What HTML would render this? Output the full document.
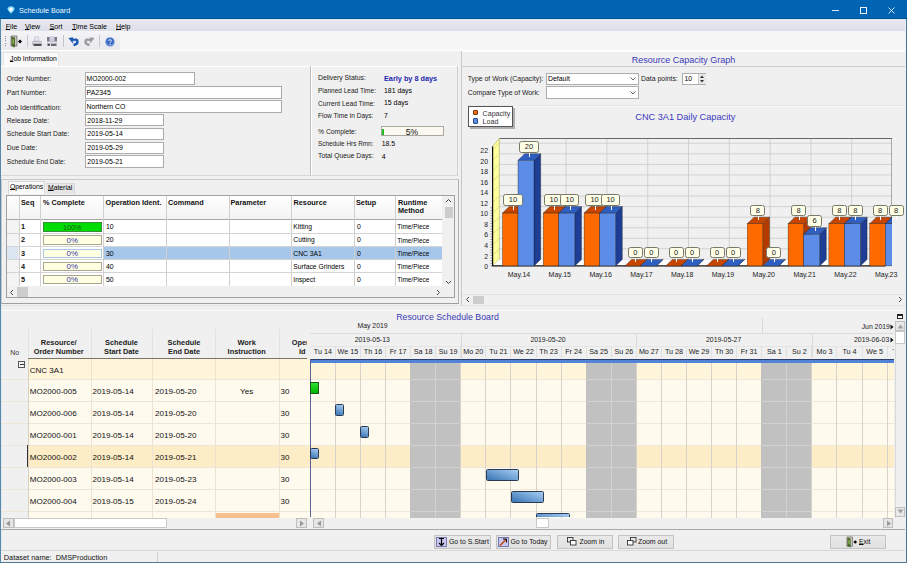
<!DOCTYPE html><html><head><meta charset="utf-8"><style>
html,body{margin:0;padding:0}
body{width:907px;height:563px;overflow:hidden;background:#F0F0F0;position:relative;font-family:"Liberation Sans",sans-serif;color:#000}
.a{position:absolute}
.t{position:absolute;white-space:nowrap;line-height:1}
u{text-decoration:underline;text-underline-offset:0px;text-decoration-thickness:0.7px}
</style></head><body>
<div class="a" style="left:0px;top:0px;width:907px;height:19px;background:#0064B2"></div>
<div class="a" style="left:0px;top:18px;width:907px;height:1px;background:#00508F"></div>
<div class="a" style="left:0px;top:19px;width:907px;height:1px;background:#D6E6F4"></div>
<svg class="a" style="left:7px;top:6px" width="8" height="8" viewBox="0 0 8 8"><path d="M4 7.8 L1 4.2 Q0.2 3 0.6 2 Q1.4 0.3 4 0.3 Q6.6 0.3 7.4 2 Q7.8 3 7 4.2 Z" fill="#8EDCF4"/><path d="M4 6 L2.2 3.8 Q1.8 2.2 4 1.6 Q6.2 2.2 5.8 3.8Z" fill="#F4FCFF"/></svg>
<div class="t" style="left:19px;top:6.67px;font-size:7.2px;color:#F0F8FF;font-weight:400;">Schedule Board</div>
<div class="a" style="left:831.5px;top:9.5px;width:7px;height:1px;background:#D8E8F8"></div>
<div class="a" style="left:859.5px;top:6.5px;width:7px;height:7px;border:1px solid #E8F2FC;box-sizing:border-box"></div>
<svg class="a" style="left:888px;top:6.5px" width="7" height="7" viewBox="0 0 7 7"><path d="M0.5 0.5 L6.5 6.5 M6.5 0.5 L0.5 6.5" stroke="#E8F2FC" stroke-width="0.9"/></svg>
<div class="a" style="left:0px;top:19px;width:1px;height:544px;background:#5A88A8"></div>
<div class="a" style="left:1px;top:20px;width:1px;height:541px;background:#DCEAF2"></div>
<div class="a" style="left:906px;top:19px;width:1px;height:544px;background:#4D7898"></div>
<div class="a" style="left:905px;top:20px;width:1px;height:541px;background:#E4EEF4"></div>
<div class="a" style="left:0px;top:562px;width:907px;height:1px;background:#4D7898"></div>
<div class="a" style="left:1px;top:561px;width:905px;height:1px;background:#E8F0F4"></div>
<div class="a" style="left:2px;top:20px;width:903px;height:11px;background:linear-gradient(#E8E8F0,#DEDEE8)"></div>
<div class="t" style="left:5.8px;top:22.65px;font-size:7.05px;color:#000;font-weight:400;"><u>F</u>ile</div>
<div class="t" style="left:25px;top:22.65px;font-size:7.05px;color:#000;font-weight:400;"><u>V</u>iew</div>
<div class="t" style="left:49.6px;top:22.65px;font-size:7.05px;color:#000;font-weight:400;"><u>S</u>ort</div>
<div class="t" style="left:72px;top:22.65px;font-size:7.05px;color:#000;font-weight:400;"><u>T</u>ime Scale</div>
<div class="t" style="left:116px;top:22.65px;font-size:7.05px;color:#000;font-weight:400;"><u>H</u>elp</div>
<div class="a" style="left:1px;top:31px;width:904px;height:20px;background:#F7F7F8"></div>
<div class="a" style="left:1px;top:31px;width:119px;height:19px;background:linear-gradient(#F4F4F6,#E9E9EE)"></div>
<div class="a" style="left:5px;top:36.0px;width:1px;height:1px;background:#8C8C9A"></div>
<div class="a" style="left:5px;top:38.2px;width:1px;height:1px;background:#8C8C9A"></div>
<div class="a" style="left:5px;top:40.4px;width:1px;height:1px;background:#8C8C9A"></div>
<div class="a" style="left:5px;top:42.6px;width:1px;height:1px;background:#8C8C9A"></div>
<div class="a" style="left:5px;top:44.8px;width:1px;height:1px;background:#8C8C9A"></div>
<div class="a" style="left:26.5px;top:35px;width:1px;height:12px;background:#C5C5CC"></div>
<div class="a" style="left:63.4px;top:35px;width:1px;height:12px;background:#C5C5CC"></div>
<div class="a" style="left:99.2px;top:35px;width:1px;height:12px;background:#C5C5CC"></div>
<svg class="a" style="left:10px;top:35px" width="13" height="13" viewBox="0 0 13 13"><path d="M1 1 H7 V11 H1Z" fill="#C8C8C0" stroke="#606058" stroke-width="0.7"/><path d="M1.5 1.5 L5 2.8 V12.5 L1.5 11Z" fill="#4E6A30"/><path d="M2.5 4 L4 4.5 V9 L2.5 8.5Z" fill="#8AB04A"/><path d="M8 6.5 L10 4.5 L12 6.5 L10 8.5Z" fill="#000"/></svg>
<svg class="a" style="left:32px;top:35.5px" width="10" height="11" viewBox="0 0 10 11"><path d="M2.5 0.5 H7 L7.5 5 H2Z" fill="#C8C8DC"/><path d="M3.5 1.5 H6.3 L6.6 4.5 H3.2Z" fill="#E8E8F4"/><path d="M0.3 5 H9.7 L9.7 9 H0.3Z" fill="#B4B4BC"/><path d="M1 6 H9 V7 H1Z" fill="#E0E0E6"/><path d="M1.5 8 H9.5 V10 H1.5Z" fill="#505058"/></svg>
<svg class="a" style="left:47px;top:36px" width="10" height="10" viewBox="0 0 10 10"><rect x="0" y="1" width="10" height="4" fill="#7A7A88"/><path d="M2.5 0.3 H7.5 V5 H2.5Z" fill="#D0D0E4"/><path d="M0.3 5 H9.7 V8 H0.3Z" fill="#B8B8C0"/><path d="M1 6 H9 V7 H1Z" fill="#E4E4EA"/><path d="M0.5 8 H3 V9.8 H0.5Z M4 8.2 H9.5 V9.8 H4Z" fill="#404048"/></svg>
<svg class="a" style="left:68px;top:37px" width="11" height="9" viewBox="0 0 11 9"><path d="M4 3.2 Q9.5 1.5 9.5 4.8 Q9.5 7.5 5.5 8" stroke="#1A56B0" stroke-width="2.4" fill="none"/><path d="M0.5 1 L5.2 0.3 L4.8 6.5Z" fill="#1A56B0"/><circle cx="5.6" cy="4.4" r="0.9" fill="#9CC4F0"/></svg>
<svg class="a" style="left:83.5px;top:37px" width="11" height="9" viewBox="0 0 11 9"><path d="M7 3.2 Q1.5 1.5 1.5 4.8 Q1.5 7.5 5.5 8" stroke="#9A9AA0" stroke-width="2.4" fill="none"/><path d="M10.5 1 L5.8 0.3 L6.2 6.5Z" fill="#9A9AA0"/></svg>
<svg class="a" style="left:105px;top:37px" width="10" height="10" viewBox="0 0 10 10"><defs><radialGradient id="hg" cx="0.5" cy="0.45" r="0.55"><stop offset="0" stop-color="#1E4FA8"/><stop offset="0.6" stop-color="#3F6FC8"/><stop offset="1" stop-color="#9DB8E8"/></radialGradient></defs><circle cx="5" cy="5" r="4.8" fill="url(#hg)"/><path d="M3.6 4 Q3.8 2.6 5.1 2.6 Q6.5 2.7 6.4 3.9 Q6.3 4.8 5.1 5.2 V6.2" stroke="#E8F0FF" stroke-width="1" fill="none"/><circle cx="5.1" cy="7.4" r="0.6" fill="#E8F0FF"/></svg>
<div class="a" style="left:1px;top:50px;width:904px;height:1px;background:#FFFFFF"></div>
<div class="a" style="left:2.5px;top:52px;width:56.5px;height:14px;background:#F9F9F9;border:1px solid #E6E6E6;border-bottom:none;box-sizing:border-box"></div>
<div class="t" style="left:10px;top:56.47px;font-size:6.8px;color:#000;font-weight:400;"><u>J</u>ob Information</div>
<div class="a" style="left:1px;top:66px;width:458px;height:110px;background:#F0F0F0;border-top:1px solid #FFFFFF;box-sizing:border-box"></div>
<div class="t" style="left:6.75px;top:76.02px;font-size:6.7px;color:#1a1a1a;font-weight:400;">Order Number:</div>
<div class="a" style="left:85.3px;top:72.3px;width:109.4px;height:12.4px;background:#FFFFFF;border:1px solid #ABABAB;box-sizing:border-box"></div>
<div class="t" style="left:86.5px;top:76.18px;font-size:6.77px;color:#000;font-weight:400;">MO2000-002</div>
<div class="t" style="left:6.75px;top:90.02px;font-size:6.69px;color:#1a1a1a;font-weight:400;">Part Number:</div>
<div class="a" style="left:85.3px;top:86.3px;width:197.2px;height:12.4px;background:#FFFFFF;border:1px solid #ABABAB;box-sizing:border-box"></div>
<div class="t" style="left:86.5px;top:90.08px;font-size:6.97px;color:#000;font-weight:400;">PA2345</div>
<div class="t" style="left:6.75px;top:103.77px;font-size:7.0px;color:#1a1a1a;font-weight:400;">Job Identification:</div>
<div class="a" style="left:85.3px;top:100.2px;width:197.2px;height:12.4px;background:#FFFFFF;border:1px solid #ABABAB;box-sizing:border-box"></div>
<div class="t" style="left:86.5px;top:104.04px;font-size:6.85px;color:#000;font-weight:400;">Northern CO</div>
<div class="t" style="left:6.75px;top:117.52px;font-size:6.69px;color:#1a1a1a;font-weight:400;">Release Date:</div>
<div class="a" style="left:85.3px;top:114px;width:78.9px;height:12.4px;background:#FFFFFF;border:1px solid #ABABAB;box-sizing:border-box"></div>
<div class="t" style="left:87.3px;top:117.59px;font-size:6.96px;color:#000;font-weight:400;">2018-11-29</div>
<div class="t" style="left:6.75px;top:131.08px;font-size:6.77px;color:#1a1a1a;font-weight:400;">Schedule Start Date:</div>
<div class="a" style="left:85.3px;top:127.7px;width:78.9px;height:12.4px;background:#FFFFFF;border:1px solid #ABABAB;box-sizing:border-box"></div>
<div class="t" style="left:87.3px;top:131.19px;font-size:6.96px;color:#000;font-weight:400;">2019-05-14</div>
<div class="t" style="left:6.75px;top:145.08px;font-size:6.77px;color:#1a1a1a;font-weight:400;">Due Date:</div>
<div class="a" style="left:85.3px;top:141.6px;width:78.9px;height:12.4px;background:#FFFFFF;border:1px solid #ABABAB;box-sizing:border-box"></div>
<div class="t" style="left:87.3px;top:145.19px;font-size:6.96px;color:#000;font-weight:400;">2019-05-29</div>
<div class="t" style="left:6.75px;top:158.96px;font-size:6.62px;color:#1a1a1a;font-weight:400;">Schedule End Date:</div>
<div class="a" style="left:85.3px;top:155.4px;width:78.9px;height:12.4px;background:#FFFFFF;border:1px solid #ABABAB;box-sizing:border-box"></div>
<div class="t" style="left:87.3px;top:158.99px;font-size:6.96px;color:#000;font-weight:400;">2019-05-21</div>
<div class="a" style="left:310px;top:66px;width:1px;height:110px;background:#BDBDBD"></div>
<div class="a" style="left:311px;top:66px;width:1px;height:110px;background:#FFFFFF"></div>
<div class="t" style="left:318px;top:75.25px;font-size:6.83px;color:#1a1a1a;font-weight:400;">Delivery Status:</div>
<div class="t" style="left:318px;top:88.01px;font-size:6.52px;color:#1a1a1a;font-weight:400;">Planned Lead Time:</div>
<div class="t" style="left:318px;top:100.63px;font-size:6.67px;color:#1a1a1a;font-weight:400;">Current Lead Time:</div>
<div class="t" style="left:318px;top:112.98px;font-size:6.57px;color:#1a1a1a;font-weight:400;">Flow Time in Days:</div>
<div class="t" style="left:318px;top:128.69px;font-size:6.76px;color:#1a1a1a;font-weight:400;">% Complete:</div>
<div class="t" style="left:318px;top:141.46px;font-size:6.4px;color:#1a1a1a;font-weight:400;">Schedule Hrs Rmn:</div>
<div class="t" style="left:318px;top:153.19px;font-size:6.75px;color:#1a1a1a;font-weight:400;">Total Queue Days:</div>
<div class="t" style="left:384px;top:75.22px;font-size:7.3px;color:#1C28B0;font-weight:700;">Early by 8 days</div>
<div class="t" style="left:384px;top:87.92px;font-size:6.9px;color:#000;font-weight:400;">181 days</div>
<div class="t" style="left:384px;top:100.42px;font-size:6.9px;color:#000;font-weight:400;">15 days</div>
<div class="t" style="left:384px;top:112.92px;font-size:6.9px;color:#000;font-weight:400;">7</div>
<div class="a" style="left:380.5px;top:125.5px;width:63px;height:10.5px;background:#FCFAF0;border:1px solid #A8A8A0;box-sizing:border-box"></div>
<div class="a" style="left:381.5px;top:129px;width:2px;height:6px;background:#22BB22"></div>
<div class="t" style="left:212px;width:400px;text-align:center;top:127.59px;font-size:8.6px;color:#111;font-weight:400;">5%</div>
<div class="t" style="left:381.7px;top:141.02px;font-size:6.9px;color:#000;font-weight:400;">18.5</div>
<div class="t" style="left:381.7px;top:153.82px;font-size:6.9px;color:#000;font-weight:400;">4</div>
<div class="a" style="left:1px;top:175px;width:457px;height:1px;background:#D8D8D8"></div>
<div class="a" style="left:457px;top:66px;width:1px;height:110px;background:#D0D0D0"></div>
<div class="a" style="left:1px;top:179px;width:457.5px;height:125px;border:1px solid #C8C8C8;border-right-color:#B0B0B0;border-bottom-color:#A0A0A0;box-sizing:border-box"></div>
<div class="a" style="left:8px;top:181px;width:37px;height:13px;background:#FAFAFA;border:1px solid #D8D8D8;border-bottom:none;box-sizing:border-box"></div>
<div class="t" style="left:10px;top:183.77px;font-size:6.8px;color:#000;font-weight:400;"><u>O</u>perations</div>
<div class="a" style="left:45.5px;top:182.5px;width:29px;height:11.5px;background:#E6E6E6;border:1px solid #D8D8D8;border-bottom:none;border-left:none;box-sizing:border-box"></div>
<div class="t" style="left:48px;top:184.77px;font-size:6.8px;color:#000;font-weight:400;"><u>M</u>aterial</div>
<div class="a" style="left:5.8px;top:195.2px;width:449.2px;height:102.80000000000001px;background:#F0F0F0;border:1px solid #A0A0A0;box-sizing:border-box"></div>
<div class="a" style="left:6.8px;top:196.2px;width:435.2px;height:23.0px;background:linear-gradient(#FFFFFF,#F3F3F3)"></div>
<div class="a" style="left:6.8px;top:219.2px;width:435.2px;height:1px;background:#A9A9A9"></div>
<div class="a" style="left:18.5px;top:220.2px;width:423.5px;height:65.40000000000003px;background:#FFFFFF"></div>
<div class="a" style="left:6.8px;top:220.2px;width:11.7px;height:65.40000000000003px;background:#F4F4F4"></div>
<div class="a" style="left:103.3px;top:246.8px;width:338.7px;height:12.6px;background:#A7C7EA"></div>
<div class="a" style="left:6.8px;top:246.8px;width:11.7px;height:12.6px;background:#DCE6F2"></div>
<div class="a" style="left:6.8px;top:232.9px;width:435.2px;height:1px;background:#D4D4D4"></div>
<div class="a" style="left:6.8px;top:246.3px;width:435.2px;height:1px;background:#D4D4D4"></div>
<div class="a" style="left:6.8px;top:259.4px;width:435.2px;height:1px;background:#D4D4D4"></div>
<div class="a" style="left:6.8px;top:272.4px;width:435.2px;height:1px;background:#D4D4D4"></div>
<div class="a" style="left:6.8px;top:285.6px;width:435.2px;height:1px;background:#D4D4D4"></div>
<div class="a" style="left:18.5px;top:196.2px;width:1px;height:89.40000000000003px;background:#CFCFCF"></div>
<div class="a" style="left:40.4px;top:196.2px;width:1px;height:89.40000000000003px;background:#CFCFCF"></div>
<div class="a" style="left:103.3px;top:196.2px;width:1px;height:89.40000000000003px;background:#CFCFCF"></div>
<div class="a" style="left:166px;top:196.2px;width:1px;height:89.40000000000003px;background:#CFCFCF"></div>
<div class="a" style="left:228.5px;top:196.2px;width:1px;height:89.40000000000003px;background:#CFCFCF"></div>
<div class="a" style="left:291.4px;top:196.2px;width:1px;height:89.40000000000003px;background:#CFCFCF"></div>
<div class="a" style="left:354px;top:196.2px;width:1px;height:89.40000000000003px;background:#CFCFCF"></div>
<div class="a" style="left:395px;top:196.2px;width:1px;height:89.40000000000003px;background:#CFCFCF"></div>
<div class="a" style="left:442px;top:196.2px;width:1px;height:89.40000000000003px;background:#CFCFCF"></div>
<div class="t" style="left:21px;top:199.02px;font-size:7.3px;color:#111;font-weight:700;">Seq</div>
<div class="t" style="left:43px;top:199.02px;font-size:7.3px;color:#111;font-weight:700;">% Complete</div>
<div class="t" style="left:105.5px;top:199.02px;font-size:7.3px;color:#111;font-weight:700;">Operation Ident.</div>
<div class="t" style="left:168px;top:199.02px;font-size:7.3px;color:#111;font-weight:700;">Command</div>
<div class="t" style="left:230.5px;top:199.02px;font-size:7.3px;color:#111;font-weight:700;">Parameter</div>
<div class="t" style="left:293.5px;top:199.02px;font-size:7.3px;color:#111;font-weight:700;">Resource</div>
<div class="t" style="left:356px;top:199.02px;font-size:7.3px;color:#111;font-weight:700;">Setup</div>
<div class="t" style="left:398px;top:199.02px;font-size:7.3px;color:#111;font-weight:700;">Runtime</div>
<div class="t" style="left:398px;top:206.92px;font-size:7.3px;color:#111;font-weight:700;">Method</div>
<div class="t" style="left:21px;top:223.02px;font-size:7.3px;color:#111;font-weight:700;">1</div>
<div class="a" style="left:42.8px;top:222.2px;width:59px;height:9.5px;background:#00DD00;border:1px solid #3A8A3A;box-sizing:border-box"></div>
<div class="t" style="left:-127.7px;width:400px;text-align:center;top:223.87px;font-size:7.2px;color:#225522;font-weight:400;">100%</div>
<div class="t" style="left:106px;top:224.02px;font-size:6.9px;color:#000;font-weight:400;">10</div>
<div class="t" style="left:293.3px;top:224.09px;font-size:6.75px;color:#000;font-weight:400;">Kitting</div>
<div class="t" style="left:357px;top:224.02px;font-size:6.9px;color:#000;font-weight:400;">0</div>
<div class="t" style="left:397.3px;top:224.24px;font-size:6.45px;color:#000;font-weight:400;">Time/Piece</div>
<div class="t" style="left:21px;top:236.32px;font-size:7.3px;color:#111;font-weight:700;">2</div>
<div class="a" style="left:42.8px;top:235.4px;width:59px;height:9.5px;background:#FFFFE2;border:1px solid #A8A890;box-sizing:border-box"></div>
<div class="t" style="left:-127.7px;width:400px;text-align:center;top:236.83px;font-size:7.9px;color:#3535A5;font-weight:400;">0%</div>
<div class="t" style="left:106px;top:237.32px;font-size:6.9px;color:#000;font-weight:400;">20</div>
<div class="t" style="left:293.3px;top:237.39px;font-size:6.75px;color:#000;font-weight:400;">Cutting</div>
<div class="t" style="left:357px;top:237.32px;font-size:6.9px;color:#000;font-weight:400;">0</div>
<div class="t" style="left:397.3px;top:237.54px;font-size:6.45px;color:#000;font-weight:400;">Time/Piece</div>
<div class="t" style="left:21px;top:249.57px;font-size:7.3px;color:#111;font-weight:700;">3</div>
<div class="a" style="left:42.8px;top:248.8px;width:59px;height:9.5px;background:#FFFFE2;border:1px solid #A9C7E8;box-sizing:border-box"></div>
<div class="t" style="left:-127.7px;width:400px;text-align:center;top:250.08px;font-size:7.9px;color:#3535A5;font-weight:400;">0%</div>
<div class="t" style="left:106px;top:250.57px;font-size:6.9px;color:#000;font-weight:400;">30</div>
<div class="t" style="left:293.3px;top:250.64px;font-size:6.75px;color:#000;font-weight:400;">CNC 3A1</div>
<div class="t" style="left:357px;top:250.57px;font-size:6.9px;color:#000;font-weight:400;">0</div>
<div class="t" style="left:397.3px;top:250.79px;font-size:6.45px;color:#000;font-weight:400;">Time/Piece</div>
<div class="t" style="left:21px;top:262.62px;font-size:7.3px;color:#111;font-weight:700;">4</div>
<div class="a" style="left:42.8px;top:261.9px;width:59px;height:9.5px;background:#FFFFE2;border:1px solid #A8A890;box-sizing:border-box"></div>
<div class="t" style="left:-127.7px;width:400px;text-align:center;top:263.13px;font-size:7.9px;color:#3535A5;font-weight:400;">0%</div>
<div class="t" style="left:106px;top:263.62px;font-size:6.9px;color:#000;font-weight:400;">40</div>
<div class="t" style="left:293.3px;top:263.69px;font-size:6.75px;color:#000;font-weight:400;">Surface Grinders</div>
<div class="t" style="left:357px;top:263.62px;font-size:6.9px;color:#000;font-weight:400;">0</div>
<div class="t" style="left:397.3px;top:263.84px;font-size:6.45px;color:#000;font-weight:400;">Time/Piece</div>
<div class="t" style="left:21px;top:275.72px;font-size:7.3px;color:#111;font-weight:700;">5</div>
<div class="a" style="left:42.8px;top:274.9px;width:59px;height:9.5px;background:#FFFFE2;border:1px solid #A8A890;box-sizing:border-box"></div>
<div class="t" style="left:-127.7px;width:400px;text-align:center;top:276.23px;font-size:7.9px;color:#3535A5;font-weight:400;">0%</div>
<div class="t" style="left:106px;top:276.72px;font-size:6.9px;color:#000;font-weight:400;">50</div>
<div class="t" style="left:293.3px;top:276.79px;font-size:6.75px;color:#000;font-weight:400;">Inspect</div>
<div class="t" style="left:357px;top:276.72px;font-size:6.9px;color:#000;font-weight:400;">0</div>
<div class="t" style="left:397.3px;top:276.94px;font-size:6.45px;color:#000;font-weight:400;">Time/Piece</div>
<div class="a" style="left:442px;top:196.2px;width:12px;height:89.40000000000003px;background:#F0F0F0"></div>
<svg class="a" style="left:445px;top:198px" width="7" height="5" viewBox="0 0 7 5"><path d="M1 4 L3.5 1.5 L6 4" stroke="#444" stroke-width="1" fill="none"/></svg>
<div class="a" style="left:444.5px;top:207px;width:8px;height:11px;background:#CDCDCD"></div>
<svg class="a" style="left:445px;top:280px" width="7" height="5" viewBox="0 0 7 5"><path d="M1 1 L3.5 3.5 L6 1" stroke="#444" stroke-width="1" fill="none"/></svg>
<div class="a" style="left:6.8px;top:285.6px;width:435.2px;height:11.5px;background:#F0F0F0"></div>
<svg class="a" style="left:9px;top:289px" width="5" height="7" viewBox="0 0 5 7"><path d="M4 1 L1.5 3.5 L4 6" stroke="#444" stroke-width="1" fill="none"/></svg>
<div class="a" style="left:17.3px;top:287px;width:10.5px;height:9.5px;background:#CDCDCD"></div>
<svg class="a" style="left:436px;top:289px" width="5" height="7" viewBox="0 0 5 7"><path d="M1 1 L3.5 3.5 L1 6" stroke="#444" stroke-width="1" fill="none"/></svg>
<div class="a" style="left:460.5px;top:51px;width:1px;height:254px;background:#C8C8C8"></div>
<div class="a" style="left:462px;top:51px;width:443px;height:255px;background:#F0F0F0"></div>
<div class="a" style="left:462px;top:51px;width:443px;height:1px;background:#FFFFFF"></div>
<div class="a" style="left:462px;top:66px;width:443px;height:1px;background:#CFCFCF"></div>
<div class="t" style="left:483.5px;width:400px;text-align:center;top:55.69px;font-size:9.0px;color:#3A3AB5;font-weight:400;">Resource Capacity Graph</div>
<div class="t" style="left:467.7px;top:76.02px;font-size:6.9px;color:#1a1a1a;font-weight:400;">Type of Work (Capacity):</div>
<div class="a" style="left:546px;top:72.5px;width:93px;height:12.8px;background:#FFFFFF;border:1px solid #ADADAD;box-sizing:border-box"></div>
<div class="t" style="left:548px;top:76.02px;font-size:6.9px;color:#000;font-weight:400;">Default</div>
<svg class="a" style="left:630px;top:77px" width="6" height="4" viewBox="0 0 6 4"><path d="M0.5 0.5 L3 3 L5.5 0.5" stroke="#555" stroke-width="0.9" fill="none"/></svg>
<div class="t" style="left:641px;top:76.02px;font-size:6.9px;color:#1a1a1a;font-weight:400;">Data points:</div>
<div class="a" style="left:682px;top:72.5px;width:24px;height:12.8px;background:#FFFFFF;border:1px solid #ADADAD;box-sizing:border-box"></div>
<div class="t" style="left:684.5px;top:76.12px;font-size:6.9px;color:#000;font-weight:400;">10</div>
<div class="a" style="left:698px;top:73.5px;width:7px;height:10.8px;background:#E8E8E8;border-left:1px solid #C8C8C8"></div>
<svg class="a" style="left:699px;top:74px" width="6" height="10" viewBox="0 0 6 10"><path d="M1 4 L3 1.5 L5 4Z M1 6 L3 8.5 L5 6Z" fill="#333"/></svg>
<div class="t" style="left:467.7px;top:89.84px;font-size:6.85px;color:#1a1a1a;font-weight:400;">Compare Type of Work:</div>
<div class="a" style="left:546px;top:86.3px;width:93px;height:12.5px;background:#FFFFFF;border:1px solid #ADADAD;box-sizing:border-box"></div>
<svg class="a" style="left:630px;top:91px" width="6" height="4" viewBox="0 0 6 4"><path d="M0.5 0.5 L3 3 L5.5 0.5" stroke="#555" stroke-width="0.9" fill="none"/></svg>
<div class="a" style="left:462px;top:104.5px;width:443px;height:1px;background:#E8E8E8"></div>
<div class="a" style="left:462px;top:105.5px;width:443px;height:1px;background:#F6F6F6"></div>
<div class="a" style="left:469.5px;top:107.5px;width:45px;height:21px;background:#B0B0B0"></div>
<div class="a" style="left:468.4px;top:106.4px;width:45px;height:21px;background:#FFFFFF;border:1px solid #555;box-sizing:border-box"></div>
<div class="a" style="left:472.5px;top:109.7px;width:5.6px;height:5.4px;background:#F06A14;border:1px solid #7A3A10;border-radius:1px;box-sizing:border-box"></div>
<div class="a" style="left:472.5px;top:118.4px;width:5.6px;height:5.4px;background:#5A8EE0;border:1px solid #2A4A88;border-radius:1px;box-sizing:border-box"></div>
<div class="t" style="left:482.6px;top:110.92px;font-size:7.1px;color:#333;font-weight:400;">Capacity</div>
<div class="t" style="left:482.6px;top:119.32px;font-size:7.1px;color:#333;font-weight:400;">Load</div>
<div class="t" style="left:485.29999999999995px;width:400px;text-align:center;top:113.49px;font-size:9.2px;color:#3A3AC0;font-weight:400;">CNC 3A1 Daily Capacity</div>
<svg class="a" style="left:462px;top:130px" width="443" height="200" viewBox="0 0 443 200"><clipPath id="cc"><rect x="0" y="0" width="430.00" height="200"/></clipPath><g clip-path="url(#cc)"><rect x="37.30" y="8.50" width="392.70" height="120.90" fill="#F0F0F0"/><line x1="37.30" y1="129.40" x2="430.00" y2="129.40" stroke="#C9C9C9" stroke-width="0.8"/><line x1="37.30" y1="118.84" x2="430.00" y2="118.84" stroke="#C9C9C9" stroke-width="0.8"/><line x1="37.30" y1="108.28" x2="430.00" y2="108.28" stroke="#C9C9C9" stroke-width="0.8"/><line x1="37.30" y1="97.72" x2="430.00" y2="97.72" stroke="#C9C9C9" stroke-width="0.8"/><line x1="37.30" y1="87.16" x2="430.00" y2="87.16" stroke="#C9C9C9" stroke-width="0.8"/><line x1="37.30" y1="76.60" x2="430.00" y2="76.60" stroke="#C9C9C9" stroke-width="0.8"/><line x1="37.30" y1="66.04" x2="430.00" y2="66.04" stroke="#C9C9C9" stroke-width="0.8"/><line x1="37.30" y1="55.48" x2="430.00" y2="55.48" stroke="#C9C9C9" stroke-width="0.8"/><line x1="37.30" y1="44.92" x2="430.00" y2="44.92" stroke="#C9C9C9" stroke-width="0.8"/><line x1="37.30" y1="34.36" x2="430.00" y2="34.36" stroke="#C9C9C9" stroke-width="0.8"/><line x1="37.30" y1="23.80" x2="430.00" y2="23.80" stroke="#C9C9C9" stroke-width="0.8"/><line x1="37.30" y1="13.24" x2="430.00" y2="13.24" stroke="#C9C9C9" stroke-width="0.8"/><line x1="63.30" y1="8.50" x2="63.30" y2="129.40" stroke="#C9C9C9" stroke-width="0.8"/><line x1="104.10" y1="8.50" x2="104.10" y2="129.40" stroke="#C9C9C9" stroke-width="0.8"/><line x1="144.90" y1="8.50" x2="144.90" y2="129.40" stroke="#C9C9C9" stroke-width="0.8"/><line x1="185.70" y1="8.50" x2="185.70" y2="129.40" stroke="#C9C9C9" stroke-width="0.8"/><line x1="226.50" y1="8.50" x2="226.50" y2="129.40" stroke="#C9C9C9" stroke-width="0.8"/><line x1="267.30" y1="8.50" x2="267.30" y2="129.40" stroke="#C9C9C9" stroke-width="0.8"/><line x1="308.10" y1="8.50" x2="308.10" y2="129.40" stroke="#C9C9C9" stroke-width="0.8"/><line x1="348.90" y1="8.50" x2="348.90" y2="129.40" stroke="#C9C9C9" stroke-width="0.8"/><line x1="389.70" y1="8.50" x2="389.70" y2="129.40" stroke="#C9C9C9" stroke-width="0.8"/><line x1="430.50" y1="8.50" x2="430.50" y2="129.40" stroke="#C9C9C9" stroke-width="0.8"/><polyline points="37.30,8.50 430.00,8.50 430.00,129.40" fill="none" stroke="#666" stroke-width="1"/><polygon points="30.60,135.90 30.60,16.50 37.30,8.50 37.30,129.40" fill="#FFFF9C" stroke="#A8A860" stroke-width="0.6"/><line x1="30.60" y1="135.90" x2="37.30" y2="129.40" stroke="#C8C888" stroke-width="0.6"/><line x1="30.60" y1="125.34" x2="37.30" y2="118.84" stroke="#C8C888" stroke-width="0.6"/><line x1="30.60" y1="114.78" x2="37.30" y2="108.28" stroke="#C8C888" stroke-width="0.6"/><line x1="30.60" y1="104.22" x2="37.30" y2="97.72" stroke="#C8C888" stroke-width="0.6"/><line x1="30.60" y1="93.66" x2="37.30" y2="87.16" stroke="#C8C888" stroke-width="0.6"/><line x1="30.60" y1="83.10" x2="37.30" y2="76.60" stroke="#C8C888" stroke-width="0.6"/><line x1="30.60" y1="72.54" x2="37.30" y2="66.04" stroke="#C8C888" stroke-width="0.6"/><line x1="30.60" y1="61.98" x2="37.30" y2="55.48" stroke="#C8C888" stroke-width="0.6"/><line x1="30.60" y1="51.42" x2="37.30" y2="44.92" stroke="#C8C888" stroke-width="0.6"/><line x1="30.60" y1="40.86" x2="37.30" y2="34.36" stroke="#C8C888" stroke-width="0.6"/><line x1="30.60" y1="30.30" x2="37.30" y2="23.80" stroke="#C8C888" stroke-width="0.6"/><line x1="30.60" y1="19.74" x2="37.30" y2="13.24" stroke="#C8C888" stroke-width="0.6"/><polygon points="30.60,135.90 37.30,129.40 430.00,129.40 423.30,135.90" fill="#FFFFFF"/><line x1="30.60" y1="135.90" x2="423.30" y2="135.90" stroke="#111" stroke-width="1.2"/><line x1="30.60" y1="135.90" x2="30.60" y2="16.50" stroke="#111" stroke-width="1.2"/><line x1="28.60" y1="135.90" x2="30.60" y2="135.90" stroke="#111" stroke-width="0.5"/><line x1="28.60" y1="133.26" x2="30.60" y2="133.26" stroke="#111" stroke-width="0.5"/><line x1="28.60" y1="130.62" x2="30.60" y2="130.62" stroke="#111" stroke-width="0.5"/><line x1="28.60" y1="127.98" x2="30.60" y2="127.98" stroke="#111" stroke-width="0.5"/><line x1="28.60" y1="125.34" x2="30.60" y2="125.34" stroke="#111" stroke-width="0.5"/><line x1="28.60" y1="122.70" x2="30.60" y2="122.70" stroke="#111" stroke-width="0.5"/><line x1="28.60" y1="120.06" x2="30.60" y2="120.06" stroke="#111" stroke-width="0.5"/><line x1="28.60" y1="117.42" x2="30.60" y2="117.42" stroke="#111" stroke-width="0.5"/><line x1="28.60" y1="114.78" x2="30.60" y2="114.78" stroke="#111" stroke-width="0.5"/><line x1="28.60" y1="112.14" x2="30.60" y2="112.14" stroke="#111" stroke-width="0.5"/><line x1="28.60" y1="109.50" x2="30.60" y2="109.50" stroke="#111" stroke-width="0.5"/><line x1="28.60" y1="106.86" x2="30.60" y2="106.86" stroke="#111" stroke-width="0.5"/><line x1="28.60" y1="104.22" x2="30.60" y2="104.22" stroke="#111" stroke-width="0.5"/><line x1="28.60" y1="101.58" x2="30.60" y2="101.58" stroke="#111" stroke-width="0.5"/><line x1="28.60" y1="98.94" x2="30.60" y2="98.94" stroke="#111" stroke-width="0.5"/><line x1="28.60" y1="96.30" x2="30.60" y2="96.30" stroke="#111" stroke-width="0.5"/><line x1="28.60" y1="93.66" x2="30.60" y2="93.66" stroke="#111" stroke-width="0.5"/><line x1="28.60" y1="91.02" x2="30.60" y2="91.02" stroke="#111" stroke-width="0.5"/><line x1="28.60" y1="88.38" x2="30.60" y2="88.38" stroke="#111" stroke-width="0.5"/><line x1="28.60" y1="85.74" x2="30.60" y2="85.74" stroke="#111" stroke-width="0.5"/><line x1="28.60" y1="83.10" x2="30.60" y2="83.10" stroke="#111" stroke-width="0.5"/><line x1="28.60" y1="80.46" x2="30.60" y2="80.46" stroke="#111" stroke-width="0.5"/><line x1="28.60" y1="77.82" x2="30.60" y2="77.82" stroke="#111" stroke-width="0.5"/><polygon points="56.00,135.90 56.00,83.10 62.70,76.60 62.70,129.40" fill="#B23C00" stroke="#1a1a1a" stroke-width="0.35"/><polygon points="40.50,83.10 47.20,76.60 62.70,76.60 56.00,83.10" fill="#C64600" stroke="#1a1a1a" stroke-width="0.35"/><rect x="40.50" y="83.10" width="15.50" height="52.80" fill="#FF6A00" stroke="#1a1a1a" stroke-width="0.35"/><polygon points="72.00,135.90 72.00,30.30 78.70,23.80 78.70,129.40" fill="#1E3E96" stroke="#1a1a1a" stroke-width="0.35"/><polygon points="56.00,30.30 62.70,23.80 78.70,23.80 72.00,30.30" fill="#2F5FC0" stroke="#1a1a1a" stroke-width="0.35"/><rect x="56.00" y="30.30" width="16.00" height="105.60" fill="#5B8DE8" stroke="#1a1a1a" stroke-width="0.35"/><polygon points="96.80,135.90 96.80,83.10 103.50,76.60 103.50,129.40" fill="#B23C00" stroke="#1a1a1a" stroke-width="0.35"/><polygon points="81.30,83.10 88.00,76.60 103.50,76.60 96.80,83.10" fill="#C64600" stroke="#1a1a1a" stroke-width="0.35"/><rect x="81.30" y="83.10" width="15.50" height="52.80" fill="#FF6A00" stroke="#1a1a1a" stroke-width="0.35"/><polygon points="112.80,135.90 112.80,83.10 119.50,76.60 119.50,129.40" fill="#1E3E96" stroke="#1a1a1a" stroke-width="0.35"/><polygon points="96.80,83.10 103.50,76.60 119.50,76.60 112.80,83.10" fill="#2F5FC0" stroke="#1a1a1a" stroke-width="0.35"/><rect x="96.80" y="83.10" width="16.00" height="52.80" fill="#5B8DE8" stroke="#1a1a1a" stroke-width="0.35"/><polygon points="137.60,135.90 137.60,83.10 144.30,76.60 144.30,129.40" fill="#B23C00" stroke="#1a1a1a" stroke-width="0.35"/><polygon points="122.10,83.10 128.80,76.60 144.30,76.60 137.60,83.10" fill="#C64600" stroke="#1a1a1a" stroke-width="0.35"/><rect x="122.10" y="83.10" width="15.50" height="52.80" fill="#FF6A00" stroke="#1a1a1a" stroke-width="0.35"/><polygon points="153.60,135.90 153.60,83.10 160.30,76.60 160.30,129.40" fill="#1E3E96" stroke="#1a1a1a" stroke-width="0.35"/><polygon points="137.60,83.10 144.30,76.60 160.30,76.60 153.60,83.10" fill="#2F5FC0" stroke="#1a1a1a" stroke-width="0.35"/><rect x="137.60" y="83.10" width="16.00" height="52.80" fill="#5B8DE8" stroke="#1a1a1a" stroke-width="0.35"/><polygon points="178.40,135.90 178.40,135.90 185.10,129.40 185.10,129.40" fill="#B23C00" stroke="#1a1a1a" stroke-width="0.35"/><polygon points="162.90,135.90 169.60,129.40 185.10,129.40 178.40,135.90" fill="#C64600" stroke="#1a1a1a" stroke-width="0.35"/><polygon points="194.40,135.90 194.40,135.90 201.10,129.40 201.10,129.40" fill="#1E3E96" stroke="#1a1a1a" stroke-width="0.35"/><polygon points="178.40,135.90 185.10,129.40 201.10,129.40 194.40,135.90" fill="#2F5FC0" stroke="#1a1a1a" stroke-width="0.35"/><polygon points="219.20,135.90 219.20,135.90 225.90,129.40 225.90,129.40" fill="#B23C00" stroke="#1a1a1a" stroke-width="0.35"/><polygon points="203.70,135.90 210.40,129.40 225.90,129.40 219.20,135.90" fill="#C64600" stroke="#1a1a1a" stroke-width="0.35"/><polygon points="235.20,135.90 235.20,135.90 241.90,129.40 241.90,129.40" fill="#1E3E96" stroke="#1a1a1a" stroke-width="0.35"/><polygon points="219.20,135.90 225.90,129.40 241.90,129.40 235.20,135.90" fill="#2F5FC0" stroke="#1a1a1a" stroke-width="0.35"/><polygon points="260.00,135.90 260.00,135.90 266.70,129.40 266.70,129.40" fill="#B23C00" stroke="#1a1a1a" stroke-width="0.35"/><polygon points="244.50,135.90 251.20,129.40 266.70,129.40 260.00,135.90" fill="#C64600" stroke="#1a1a1a" stroke-width="0.35"/><polygon points="276.00,135.90 276.00,135.90 282.70,129.40 282.70,129.40" fill="#1E3E96" stroke="#1a1a1a" stroke-width="0.35"/><polygon points="260.00,135.90 266.70,129.40 282.70,129.40 276.00,135.90" fill="#2F5FC0" stroke="#1a1a1a" stroke-width="0.35"/><polygon points="300.80,135.90 300.80,93.66 307.50,87.16 307.50,129.40" fill="#B23C00" stroke="#1a1a1a" stroke-width="0.35"/><polygon points="285.30,93.66 292.00,87.16 307.50,87.16 300.80,93.66" fill="#C64600" stroke="#1a1a1a" stroke-width="0.35"/><rect x="285.30" y="93.66" width="15.50" height="42.24" fill="#FF6A00" stroke="#1a1a1a" stroke-width="0.35"/><polygon points="316.80,135.90 316.80,135.90 323.50,129.40 323.50,129.40" fill="#1E3E96" stroke="#1a1a1a" stroke-width="0.35"/><polygon points="300.80,135.90 307.50,129.40 323.50,129.40 316.80,135.90" fill="#2F5FC0" stroke="#1a1a1a" stroke-width="0.35"/><polygon points="341.60,135.90 341.60,93.66 348.30,87.16 348.30,129.40" fill="#B23C00" stroke="#1a1a1a" stroke-width="0.35"/><polygon points="326.10,93.66 332.80,87.16 348.30,87.16 341.60,93.66" fill="#C64600" stroke="#1a1a1a" stroke-width="0.35"/><rect x="326.10" y="93.66" width="15.50" height="42.24" fill="#FF6A00" stroke="#1a1a1a" stroke-width="0.35"/><polygon points="357.60,135.90 357.60,104.22 364.30,97.72 364.30,129.40" fill="#1E3E96" stroke="#1a1a1a" stroke-width="0.35"/><polygon points="341.60,104.22 348.30,97.72 364.30,97.72 357.60,104.22" fill="#2F5FC0" stroke="#1a1a1a" stroke-width="0.35"/><rect x="341.60" y="104.22" width="16.00" height="31.68" fill="#5B8DE8" stroke="#1a1a1a" stroke-width="0.35"/><polygon points="382.40,135.90 382.40,93.66 389.10,87.16 389.10,129.40" fill="#B23C00" stroke="#1a1a1a" stroke-width="0.35"/><polygon points="366.90,93.66 373.60,87.16 389.10,87.16 382.40,93.66" fill="#C64600" stroke="#1a1a1a" stroke-width="0.35"/><rect x="366.90" y="93.66" width="15.50" height="42.24" fill="#FF6A00" stroke="#1a1a1a" stroke-width="0.35"/><polygon points="398.40,135.90 398.40,93.66 405.10,87.16 405.10,129.40" fill="#1E3E96" stroke="#1a1a1a" stroke-width="0.35"/><polygon points="382.40,93.66 389.10,87.16 405.10,87.16 398.40,93.66" fill="#2F5FC0" stroke="#1a1a1a" stroke-width="0.35"/><rect x="382.40" y="93.66" width="16.00" height="42.24" fill="#5B8DE8" stroke="#1a1a1a" stroke-width="0.35"/><polygon points="423.20,135.90 423.20,93.66 429.90,87.16 429.90,129.40" fill="#B23C00" stroke="#1a1a1a" stroke-width="0.35"/><polygon points="407.70,93.66 414.40,87.16 429.90,87.16 423.20,93.66" fill="#C64600" stroke="#1a1a1a" stroke-width="0.35"/><rect x="407.70" y="93.66" width="15.50" height="42.24" fill="#FF6A00" stroke="#1a1a1a" stroke-width="0.35"/><polygon points="439.20,135.90 439.20,93.66 445.90,87.16 445.90,129.40" fill="#1E3E96" stroke="#1a1a1a" stroke-width="0.35"/><polygon points="423.20,93.66 429.90,87.16 445.90,87.16 439.20,93.66" fill="#2F5FC0" stroke="#1a1a1a" stroke-width="0.35"/><rect x="423.20" y="93.66" width="16.00" height="42.24" fill="#5B8DE8" stroke="#1a1a1a" stroke-width="0.35"/></g></svg>
<div class="t" style="left:88px;width:400px;text-align:right;top:264.12px;font-size:6.9px;color:#222;font-weight:400;">0</div>
<div class="t" style="left:88px;width:400px;text-align:right;top:253.56px;font-size:6.9px;color:#222;font-weight:400;">2</div>
<div class="t" style="left:88px;width:400px;text-align:right;top:243.00px;font-size:6.9px;color:#222;font-weight:400;">4</div>
<div class="t" style="left:88px;width:400px;text-align:right;top:232.44px;font-size:6.9px;color:#222;font-weight:400;">6</div>
<div class="t" style="left:88px;width:400px;text-align:right;top:221.88px;font-size:6.9px;color:#222;font-weight:400;">8</div>
<div class="t" style="left:88px;width:400px;text-align:right;top:211.32px;font-size:6.9px;color:#222;font-weight:400;">10</div>
<div class="t" style="left:88px;width:400px;text-align:right;top:200.76px;font-size:6.9px;color:#222;font-weight:400;">12</div>
<div class="t" style="left:88px;width:400px;text-align:right;top:190.20px;font-size:6.9px;color:#222;font-weight:400;">14</div>
<div class="t" style="left:88px;width:400px;text-align:right;top:179.64px;font-size:6.9px;color:#222;font-weight:400;">16</div>
<div class="t" style="left:88px;width:400px;text-align:right;top:169.08px;font-size:6.9px;color:#222;font-weight:400;">18</div>
<div class="t" style="left:88px;width:400px;text-align:right;top:158.52px;font-size:6.9px;color:#222;font-weight:400;">20</div>
<div class="t" style="left:88px;width:400px;text-align:right;top:147.96px;font-size:6.9px;color:#222;font-weight:400;">22</div>
<div class="a" style="left:503.40px;top:194.00px;width:19.2px;height:11.6px;box-sizing:border-box;border:1px solid #77776A;border-radius:2.5px;background:#FFFFE8;font-size:7.5px;line-height:9.8px;text-align:center;color:#222">10</div>
<div class="a" style="left:513.0px;top:205.59999999999997px;width:1px;height:4px;background:#FFFFFF"></div>
<div class="a" style="left:519.40px;top:141.20px;width:19.2px;height:11.6px;box-sizing:border-box;border:1px solid #77776A;border-radius:2.5px;background:#FFFFE8;font-size:7.5px;line-height:9.8px;text-align:center;color:#222">20</div>
<div class="a" style="left:529.0px;top:152.79999999999995px;width:1px;height:4px;background:#FFFFFF"></div>
<div class="t" style="left:319.0px;width:400px;text-align:center;top:271.27px;font-size:7.0px;color:#222;font-weight:400;">May.14</div>
<div class="a" style="left:544.20px;top:194.00px;width:19.2px;height:11.6px;box-sizing:border-box;border:1px solid #77776A;border-radius:2.5px;background:#FFFFE8;font-size:7.5px;line-height:9.8px;text-align:center;color:#222">10</div>
<div class="a" style="left:553.8px;top:205.59999999999997px;width:1px;height:4px;background:#FFFFFF"></div>
<div class="a" style="left:560.20px;top:194.00px;width:19.2px;height:11.6px;box-sizing:border-box;border:1px solid #77776A;border-radius:2.5px;background:#FFFFE8;font-size:7.5px;line-height:9.8px;text-align:center;color:#222">10</div>
<div class="a" style="left:569.8px;top:205.59999999999997px;width:1px;height:4px;background:#FFFFFF"></div>
<div class="t" style="left:359.79999999999995px;width:400px;text-align:center;top:271.27px;font-size:7.0px;color:#222;font-weight:400;">May.15</div>
<div class="a" style="left:585.00px;top:194.00px;width:19.2px;height:11.6px;box-sizing:border-box;border:1px solid #77776A;border-radius:2.5px;background:#FFFFE8;font-size:7.5px;line-height:9.8px;text-align:center;color:#222">10</div>
<div class="a" style="left:594.6px;top:205.59999999999997px;width:1px;height:4px;background:#FFFFFF"></div>
<div class="a" style="left:601.00px;top:194.00px;width:19.2px;height:11.6px;box-sizing:border-box;border:1px solid #77776A;border-radius:2.5px;background:#FFFFE8;font-size:7.5px;line-height:9.8px;text-align:center;color:#222">10</div>
<div class="a" style="left:610.6px;top:205.59999999999997px;width:1px;height:4px;background:#FFFFFF"></div>
<div class="t" style="left:400.6px;width:400px;text-align:center;top:271.27px;font-size:7.0px;color:#222;font-weight:400;">May.16</div>
<div class="a" style="left:627.90px;top:246.80px;width:15.0px;height:11.6px;box-sizing:border-box;border:1px solid #77776A;border-radius:2.5px;background:#FFFFE8;font-size:7.5px;line-height:9.8px;text-align:center;color:#222">0</div>
<div class="a" style="left:635.4px;top:258.4px;width:1px;height:4px;background:#FFFFFF"></div>
<div class="a" style="left:643.90px;top:246.80px;width:15.0px;height:11.6px;box-sizing:border-box;border:1px solid #77776A;border-radius:2.5px;background:#FFFFE8;font-size:7.5px;line-height:9.8px;text-align:center;color:#222">0</div>
<div class="a" style="left:651.4px;top:258.4px;width:1px;height:4px;background:#FFFFFF"></div>
<div class="t" style="left:441.4px;width:400px;text-align:center;top:271.27px;font-size:7.0px;color:#222;font-weight:400;">May.17</div>
<div class="a" style="left:668.70px;top:246.80px;width:15.0px;height:11.6px;box-sizing:border-box;border:1px solid #77776A;border-radius:2.5px;background:#FFFFE8;font-size:7.5px;line-height:9.8px;text-align:center;color:#222">0</div>
<div class="a" style="left:676.2px;top:258.4px;width:1px;height:4px;background:#FFFFFF"></div>
<div class="a" style="left:684.70px;top:246.80px;width:15.0px;height:11.6px;box-sizing:border-box;border:1px solid #77776A;border-radius:2.5px;background:#FFFFE8;font-size:7.5px;line-height:9.8px;text-align:center;color:#222">0</div>
<div class="a" style="left:692.2px;top:258.4px;width:1px;height:4px;background:#FFFFFF"></div>
<div class="t" style="left:482.20000000000005px;width:400px;text-align:center;top:271.27px;font-size:7.0px;color:#222;font-weight:400;">May.18</div>
<div class="a" style="left:709.50px;top:246.80px;width:15.0px;height:11.6px;box-sizing:border-box;border:1px solid #77776A;border-radius:2.5px;background:#FFFFE8;font-size:7.5px;line-height:9.8px;text-align:center;color:#222">0</div>
<div class="a" style="left:717.0px;top:258.4px;width:1px;height:4px;background:#FFFFFF"></div>
<div class="a" style="left:725.50px;top:246.80px;width:15.0px;height:11.6px;box-sizing:border-box;border:1px solid #77776A;border-radius:2.5px;background:#FFFFE8;font-size:7.5px;line-height:9.8px;text-align:center;color:#222">0</div>
<div class="a" style="left:733.0px;top:258.4px;width:1px;height:4px;background:#FFFFFF"></div>
<div class="t" style="left:523.0px;width:400px;text-align:center;top:271.27px;font-size:7.0px;color:#222;font-weight:400;">May.19</div>
<div class="a" style="left:750.30px;top:204.56px;width:15.0px;height:11.6px;box-sizing:border-box;border:1px solid #77776A;border-radius:2.5px;background:#FFFFE8;font-size:7.5px;line-height:9.8px;text-align:center;color:#222">8</div>
<div class="a" style="left:757.8px;top:216.15999999999997px;width:1px;height:4px;background:#FFFFFF"></div>
<div class="a" style="left:766.30px;top:246.80px;width:15.0px;height:11.6px;box-sizing:border-box;border:1px solid #77776A;border-radius:2.5px;background:#FFFFE8;font-size:7.5px;line-height:9.8px;text-align:center;color:#222">0</div>
<div class="a" style="left:773.8px;top:258.4px;width:1px;height:4px;background:#FFFFFF"></div>
<div class="t" style="left:563.8px;width:400px;text-align:center;top:271.27px;font-size:7.0px;color:#222;font-weight:400;">May.20</div>
<div class="a" style="left:791.10px;top:204.56px;width:15.0px;height:11.6px;box-sizing:border-box;border:1px solid #77776A;border-radius:2.5px;background:#FFFFE8;font-size:7.5px;line-height:9.8px;text-align:center;color:#222">8</div>
<div class="a" style="left:798.5999999999999px;top:216.15999999999997px;width:1px;height:4px;background:#FFFFFF"></div>
<div class="a" style="left:807.10px;top:215.12px;width:15.0px;height:11.6px;box-sizing:border-box;border:1px solid #77776A;border-radius:2.5px;background:#FFFFE8;font-size:7.5px;line-height:9.8px;text-align:center;color:#222">6</div>
<div class="a" style="left:814.5999999999999px;top:226.71999999999997px;width:1px;height:4px;background:#FFFFFF"></div>
<div class="t" style="left:604.5999999999999px;width:400px;text-align:center;top:271.27px;font-size:7.0px;color:#222;font-weight:400;">May.21</div>
<div class="a" style="left:831.90px;top:204.56px;width:15.0px;height:11.6px;box-sizing:border-box;border:1px solid #77776A;border-radius:2.5px;background:#FFFFE8;font-size:7.5px;line-height:9.8px;text-align:center;color:#222">8</div>
<div class="a" style="left:839.4px;top:216.15999999999997px;width:1px;height:4px;background:#FFFFFF"></div>
<div class="a" style="left:847.90px;top:204.56px;width:15.0px;height:11.6px;box-sizing:border-box;border:1px solid #77776A;border-radius:2.5px;background:#FFFFE8;font-size:7.5px;line-height:9.8px;text-align:center;color:#222">8</div>
<div class="a" style="left:855.4px;top:216.15999999999997px;width:1px;height:4px;background:#FFFFFF"></div>
<div class="t" style="left:645.4px;width:400px;text-align:center;top:271.27px;font-size:7.0px;color:#222;font-weight:400;">May.22</div>
<div class="a" style="left:872.70px;top:204.56px;width:15.0px;height:11.6px;box-sizing:border-box;border:1px solid #77776A;border-radius:2.5px;background:#FFFFE8;font-size:7.5px;line-height:9.8px;text-align:center;color:#222">8</div>
<div class="a" style="left:880.2px;top:216.15999999999997px;width:1px;height:4px;background:#FFFFFF"></div>
<div class="a" style="left:888.70px;top:204.56px;width:15.0px;height:11.6px;box-sizing:border-box;border:1px solid #77776A;border-radius:2.5px;background:#FFFFE8;font-size:7.5px;line-height:9.8px;text-align:center;color:#222">8</div>
<div class="a" style="left:896.2px;top:216.15999999999997px;width:1px;height:4px;background:#FFFFFF"></div>
<div class="t" style="left:686.2px;width:400px;text-align:center;top:271.27px;font-size:7.0px;color:#222;font-weight:400;">May.23</div>
<div class="a" style="left:462px;top:294px;width:443px;height:1px;background:#E0E0E0"></div>
<svg class="a" style="left:465px;top:296px" width="5" height="7" viewBox="0 0 5 7"><path d="M4 1 L1.5 3.5 L4 6" stroke="#444" stroke-width="1" fill="none"/></svg>
<div class="a" style="left:472.8px;top:295.9px;width:10.8px;height:8px;background:#CDCDCD"></div>
<svg class="a" style="left:898px;top:296px" width="5" height="7" viewBox="0 0 5 7"><path d="M1 1 L3.5 3.5 L1 6" stroke="#444" stroke-width="1" fill="none"/></svg>
<div class="a" style="left:1px;top:305px;width:904px;height:1px;background:#E4E4E4"></div>
<div class="a" style="left:1px;top:310px;width:904px;height:1px;background:#FAFAFA"></div>
<div class="t" style="left:247.5px;width:400px;text-align:center;top:312.89px;font-size:8.8px;color:#3A3AB5;font-weight:400;">Resource Schedule Board</div>
<div class="a" style="left:897px;top:314px;width:5.5px;height:5px;border:1px solid #222;border-top-width:2px;box-sizing:border-box;background:#fff"></div>
<div class="a" style="left:28px;top:329px;width:1px;height:28px;background:#E2E2E2"></div>
<div class="a" style="left:90.5px;top:329px;width:1px;height:29px;background:#E2E2E2"></div>
<div class="a" style="left:152px;top:329px;width:1px;height:29px;background:#E2E2E2"></div>
<div class="a" style="left:215px;top:329px;width:1px;height:29px;background:#E2E2E2"></div>
<div class="a" style="left:278.5px;top:329px;width:1px;height:29px;background:#E2E2E2"></div>
<div class="t" style="left:10.3px;top:349.07px;font-size:7.0px;color:#333;font-weight:400;">No</div>
<div class="t" style="left:-141.3px;width:400px;text-align:center;top:339.17px;font-size:7.4px;color:#222;font-weight:700;">Resource/</div>
<div class="t" style="left:-141.3px;width:400px;text-align:center;top:348.47px;font-size:7.4px;color:#222;font-weight:700;">Order Number</div>
<div class="t" style="left:-78.5px;width:400px;text-align:center;top:339.17px;font-size:7.4px;color:#222;font-weight:700;">Schedule</div>
<div class="t" style="left:-78.5px;width:400px;text-align:center;top:348.47px;font-size:7.4px;color:#222;font-weight:700;">Start Date</div>
<div class="t" style="left:-16px;width:400px;text-align:center;top:339.17px;font-size:7.4px;color:#222;font-weight:700;">Schedule</div>
<div class="t" style="left:-16px;width:400px;text-align:center;top:348.47px;font-size:7.4px;color:#222;font-weight:700;">End Date</div>
<div class="t" style="left:46.69999999999999px;width:400px;text-align:center;top:339.17px;font-size:7.4px;color:#222;font-weight:700;">Work</div>
<div class="t" style="left:46.69999999999999px;width:400px;text-align:center;top:348.47px;font-size:7.4px;color:#222;font-weight:700;">Instruction</div>
<div class="t" style="left:291.7px;top:339.17px;font-size:7.4px;color:#222;font-weight:700;width:15.5px;overflow:hidden">Oper</div>
<div class="t" style="left:299px;top:348.47px;font-size:7.4px;color:#222;font-weight:700;">Id</div>
<div class="a" style="left:28px;top:357.5px;width:279px;height:1.5px;background:#7A7468"></div>
<div class="a" style="left:28px;top:358.5px;width:281.5px;height:159px;background:#FFFAEE"></div>
<div class="a" style="left:28px;top:358.5px;width:281.5px;height:20.9px;background:#FFF5DA"></div>
<div class="a" style="left:28px;top:445.4px;width:281.5px;height:22px;background:#FDEDC6"></div>
<div class="a" style="left:1px;top:379.4px;width:308.5px;height:1px;background:#EDE6D8"></div>
<div class="a" style="left:1px;top:401.4px;width:308.5px;height:1px;background:#EDE6D8"></div>
<div class="a" style="left:1px;top:423.4px;width:308.5px;height:1px;background:#EDE6D8"></div>
<div class="a" style="left:1px;top:445.4px;width:308.5px;height:1px;background:#EDE6D8"></div>
<div class="a" style="left:1px;top:467.4px;width:308.5px;height:1px;background:#EDE6D8"></div>
<div class="a" style="left:1px;top:489.4px;width:308.5px;height:1px;background:#EDE6D8"></div>
<div class="a" style="left:1px;top:511.4px;width:308.5px;height:1px;background:#EDE6D8"></div>
<div class="a" style="left:90.5px;top:358.5px;width:1px;height:159px;background:#EDE3D0"></div>
<div class="a" style="left:152px;top:358.5px;width:1px;height:159px;background:#EDE3D0"></div>
<div class="a" style="left:215px;top:358.5px;width:1px;height:159px;background:#EDE3D0"></div>
<div class="a" style="left:278.5px;top:358.5px;width:1px;height:159px;background:#EDE3D0"></div>
<div class="a" style="left:28px;top:358.5px;width:1px;height:159px;background:#D8D0C0"></div>
<div class="a" style="left:27px;top:445.4px;width:1px;height:22px;background:#333"></div>
<div class="a" style="left:18.3px;top:361px;width:7px;height:6.5px;border:1px solid #555;box-sizing:border-box;background:#F4F4F4"></div>
<div class="a" style="left:19.8px;top:364px;width:4px;height:1px;background:#333"></div>
<div class="t" style="left:29.8px;top:367.08px;font-size:8.0px;color:#111;font-weight:400;">CNC 3A1</div>
<div class="t" style="left:29.8px;top:388.06px;font-size:8.05px;color:#111;font-weight:400;">MO2000-005</div>
<div class="t" style="left:92.4px;top:388.03px;font-size:8.1px;color:#111;font-weight:400;">2019-05-14</div>
<div class="t" style="left:155px;top:388.03px;font-size:8.1px;color:#111;font-weight:400;">2019-05-20</div>
<div class="t" style="left:46.69999999999999px;width:400px;text-align:center;top:388.03px;font-size:8.1px;color:#111;font-weight:400;">Yes</div>
<div class="t" style="left:280.6px;top:388.08px;font-size:8.0px;color:#111;font-weight:400;">30</div>
<div class="t" style="left:29.8px;top:410.06px;font-size:8.05px;color:#111;font-weight:400;">MO2000-006</div>
<div class="t" style="left:92.4px;top:410.03px;font-size:8.1px;color:#111;font-weight:400;">2019-05-14</div>
<div class="t" style="left:155px;top:410.03px;font-size:8.1px;color:#111;font-weight:400;">2019-05-20</div>
<div class="t" style="left:280.6px;top:410.08px;font-size:8.0px;color:#111;font-weight:400;">30</div>
<div class="t" style="left:29.8px;top:432.06px;font-size:8.05px;color:#111;font-weight:400;">MO2000-001</div>
<div class="t" style="left:92.4px;top:432.03px;font-size:8.1px;color:#111;font-weight:400;">2019-05-14</div>
<div class="t" style="left:155px;top:432.03px;font-size:8.1px;color:#111;font-weight:400;">2019-05-20</div>
<div class="t" style="left:280.6px;top:432.08px;font-size:8.0px;color:#111;font-weight:400;">30</div>
<div class="t" style="left:29.8px;top:454.06px;font-size:8.05px;color:#111;font-weight:400;">MO2000-002</div>
<div class="t" style="left:92.4px;top:454.03px;font-size:8.1px;color:#111;font-weight:400;">2019-05-14</div>
<div class="t" style="left:155px;top:454.03px;font-size:8.1px;color:#111;font-weight:400;">2019-05-21</div>
<div class="t" style="left:280.6px;top:454.08px;font-size:8.0px;color:#111;font-weight:400;">30</div>
<div class="t" style="left:29.8px;top:476.06px;font-size:8.05px;color:#111;font-weight:400;">MO2000-003</div>
<div class="t" style="left:92.4px;top:476.03px;font-size:8.1px;color:#111;font-weight:400;">2019-05-14</div>
<div class="t" style="left:155px;top:476.03px;font-size:8.1px;color:#111;font-weight:400;">2019-05-23</div>
<div class="t" style="left:280.6px;top:476.08px;font-size:8.0px;color:#111;font-weight:400;">30</div>
<div class="t" style="left:29.8px;top:498.06px;font-size:8.05px;color:#111;font-weight:400;">MO2000-004</div>
<div class="t" style="left:92.4px;top:498.03px;font-size:8.1px;color:#111;font-weight:400;">2019-05-15</div>
<div class="t" style="left:155px;top:498.03px;font-size:8.1px;color:#111;font-weight:400;">2019-05-24</div>
<div class="t" style="left:280.6px;top:498.08px;font-size:8.0px;color:#111;font-weight:400;">30</div>
<div class="a" style="left:215.5px;top:512.5px;width:63px;height:5px;background:#FAC090"></div>
<div class="a" style="left:1px;top:517.5px;width:306px;height:11px;background:#F0F0F0"></div>
<div class="a" style="left:3px;top:517.8px;width:10.5px;height:10.5px;background:#E6E6E6;border:1px solid #BDBDBD;box-sizing:border-box"></div>
<svg class="a" style="left:5px;top:519.5px" width="6" height="7" viewBox="0 0 6 7"><path d="M5 0.5 L1 3.5 L5 6.5Z" fill="#999"/></svg>
<div class="a" style="left:13.5px;top:518px;width:153px;height:10.3px;background:#FFFFFF;border:1px solid #C8C8C8;box-sizing:border-box"></div>
<div class="a" style="left:296px;top:517.8px;width:11px;height:10.5px;background:#E6E6E6;border:1px solid #BDBDBD;box-sizing:border-box"></div>
<svg class="a" style="left:299px;top:519.5px" width="6" height="7" viewBox="0 0 6 7"><path d="M1 0.5 L5 3.5 L1 6.5Z" fill="#999"/></svg>
<div class="a" style="left:310.3px;top:333px;width:584.2px;height:1px;background:#DCDCDC"></div>
<div class="a" style="left:310.3px;top:345.6px;width:584.2px;height:1px;background:#E4E4E4"></div>
<div class="t" style="left:357.5px;top:323.44px;font-size:6.85px;color:#222;font-weight:400;">May 2019</div>
<div class="a" style="left:761.8px;top:318px;width:1px;height:15px;background:#DADADA"></div>
<div class="t" style="left:861.7px;top:323.74px;font-size:6.85px;color:#222;font-weight:400;">Jun 2019</div>
<svg class="a" style="left:890px;top:323.5px" width="4" height="6" viewBox="0 0 4 6"><path d="M0.5 0.5 L3.5 3 L0.5 5.5Z" fill="#111"/></svg>
<div class="t" style="left:172.3px;width:400px;text-align:center;top:336.62px;font-size:6.9px;color:#222;font-weight:400;">2019-05-13</div>
<div class="t" style="left:348px;width:400px;text-align:center;top:336.62px;font-size:6.9px;color:#222;font-weight:400;">2019-05-20</div>
<div class="t" style="left:523.6px;width:400px;text-align:center;top:336.62px;font-size:6.9px;color:#222;font-weight:400;">2019-05-27</div>
<div class="t" style="left:854px;top:336.62px;font-size:6.9px;color:#222;font-weight:400;">2019-06-03</div>
<svg class="a" style="left:890px;top:336.5px" width="4" height="6" viewBox="0 0 4 6"><path d="M0.5 0.5 L3.5 3 L0.5 5.5Z" fill="#111"/></svg>
<div class="a" style="left:460.5px;top:333px;width:1px;height:25px;background:#DADADA"></div>
<div class="a" style="left:636.3px;top:333px;width:1px;height:25px;background:#DADADA"></div>
<div class="a" style="left:812px;top:333px;width:1px;height:25px;background:#DADADA"></div>
<div class="a" style="left:310.3px;top:345px;width:584.20px;height:172.50px;overflow:hidden">
<div class="t" style="left:0.00px;width:25.08px;text-align:center;top:3.27px;font-size:7.2px;color:#222">Tu 14</div>
<div class="a" style="left:0.00px;top:17.50px;width:25.08px;height:155.00px;background:#FFFAEE"></div>
<div class="a" style="left:0.00px;top:17.50px;width:25.08px;height:16.90px;background:#FEF5DA"></div>
<div class="a" style="left:0.00px;top:100.40px;width:25.08px;height:22px;background:#FDEDC6"></div>
<div class="a" style="left:0.00px;top:34.40px;width:25.08px;height:1px;background:#EEE7DA"></div>
<div class="a" style="left:0.00px;top:56.40px;width:25.08px;height:1px;background:#EEE7DA"></div>
<div class="a" style="left:0.00px;top:78.40px;width:25.08px;height:1px;background:#EEE7DA"></div>
<div class="a" style="left:0.00px;top:100.40px;width:25.08px;height:1px;background:#EEE7DA"></div>
<div class="a" style="left:0.00px;top:122.40px;width:25.08px;height:1px;background:#EEE7DA"></div>
<div class="a" style="left:0.00px;top:144.40px;width:25.08px;height:1px;background:#EEE7DA"></div>
<div class="a" style="left:0.00px;top:166.40px;width:25.08px;height:1px;background:#EEE7DA"></div>
<div class="t" style="left:25.08px;width:25.08px;text-align:center;top:3.27px;font-size:7.2px;color:#222">We 15</div>
<div class="a" style="left:24.58px;top:1px;width:1px;height:12px;background:#E0E0E0"></div>
<div class="a" style="left:25.08px;top:17.50px;width:25.08px;height:155.00px;background:#FFFAEE"></div>
<div class="a" style="left:25.08px;top:17.50px;width:25.08px;height:16.90px;background:#FEF5DA"></div>
<div class="a" style="left:25.08px;top:100.40px;width:25.08px;height:22px;background:#FDEDC6"></div>
<div class="a" style="left:25.08px;top:34.40px;width:25.08px;height:1px;background:#EEE7DA"></div>
<div class="a" style="left:25.08px;top:56.40px;width:25.08px;height:1px;background:#EEE7DA"></div>
<div class="a" style="left:25.08px;top:78.40px;width:25.08px;height:1px;background:#EEE7DA"></div>
<div class="a" style="left:25.08px;top:100.40px;width:25.08px;height:1px;background:#EEE7DA"></div>
<div class="a" style="left:25.08px;top:122.40px;width:25.08px;height:1px;background:#EEE7DA"></div>
<div class="a" style="left:25.08px;top:144.40px;width:25.08px;height:1px;background:#EEE7DA"></div>
<div class="a" style="left:25.08px;top:166.40px;width:25.08px;height:1px;background:#EEE7DA"></div>
<div class="a" style="left:24.58px;top:17.50px;width:1px;height:155.00px;background:#D8D2C8"></div>
<div class="t" style="left:50.16px;width:25.08px;text-align:center;top:3.27px;font-size:7.2px;color:#222">Th 16</div>
<div class="a" style="left:49.66px;top:1px;width:1px;height:12px;background:#E0E0E0"></div>
<div class="a" style="left:50.16px;top:17.50px;width:25.08px;height:155.00px;background:#FFFAEE"></div>
<div class="a" style="left:50.16px;top:17.50px;width:25.08px;height:16.90px;background:#FEF5DA"></div>
<div class="a" style="left:50.16px;top:100.40px;width:25.08px;height:22px;background:#FDEDC6"></div>
<div class="a" style="left:50.16px;top:34.40px;width:25.08px;height:1px;background:#EEE7DA"></div>
<div class="a" style="left:50.16px;top:56.40px;width:25.08px;height:1px;background:#EEE7DA"></div>
<div class="a" style="left:50.16px;top:78.40px;width:25.08px;height:1px;background:#EEE7DA"></div>
<div class="a" style="left:50.16px;top:100.40px;width:25.08px;height:1px;background:#EEE7DA"></div>
<div class="a" style="left:50.16px;top:122.40px;width:25.08px;height:1px;background:#EEE7DA"></div>
<div class="a" style="left:50.16px;top:144.40px;width:25.08px;height:1px;background:#EEE7DA"></div>
<div class="a" style="left:50.16px;top:166.40px;width:25.08px;height:1px;background:#EEE7DA"></div>
<div class="a" style="left:49.66px;top:17.50px;width:1px;height:155.00px;background:#D8D2C8"></div>
<div class="t" style="left:75.24px;width:25.08px;text-align:center;top:3.27px;font-size:7.2px;color:#222">Fr 17</div>
<div class="a" style="left:74.74px;top:1px;width:1px;height:12px;background:#E0E0E0"></div>
<div class="a" style="left:75.24px;top:17.50px;width:25.08px;height:155.00px;background:#FFFAEE"></div>
<div class="a" style="left:75.24px;top:17.50px;width:25.08px;height:16.90px;background:#FEF5DA"></div>
<div class="a" style="left:75.24px;top:100.40px;width:25.08px;height:22px;background:#FDEDC6"></div>
<div class="a" style="left:75.24px;top:34.40px;width:25.08px;height:1px;background:#EEE7DA"></div>
<div class="a" style="left:75.24px;top:56.40px;width:25.08px;height:1px;background:#EEE7DA"></div>
<div class="a" style="left:75.24px;top:78.40px;width:25.08px;height:1px;background:#EEE7DA"></div>
<div class="a" style="left:75.24px;top:100.40px;width:25.08px;height:1px;background:#EEE7DA"></div>
<div class="a" style="left:75.24px;top:122.40px;width:25.08px;height:1px;background:#EEE7DA"></div>
<div class="a" style="left:75.24px;top:144.40px;width:25.08px;height:1px;background:#EEE7DA"></div>
<div class="a" style="left:75.24px;top:166.40px;width:25.08px;height:1px;background:#EEE7DA"></div>
<div class="a" style="left:74.74px;top:17.50px;width:1px;height:155.00px;background:#D8D2C8"></div>
<div class="t" style="left:100.32px;width:25.08px;text-align:center;top:3.27px;font-size:7.2px;color:#222">Sa 18</div>
<div class="a" style="left:99.82px;top:1px;width:1px;height:12px;background:#E0E0E0"></div>
<div class="a" style="left:100.32px;top:17.50px;width:25.08px;height:155.00px;background:#C1C1C1"></div>
<div class="a" style="left:100.32px;top:34.40px;width:25.08px;height:1px;background:#D2D2D2"></div>
<div class="a" style="left:100.32px;top:56.40px;width:25.08px;height:1px;background:#D2D2D2"></div>
<div class="a" style="left:100.32px;top:78.40px;width:25.08px;height:1px;background:#D2D2D2"></div>
<div class="a" style="left:100.32px;top:100.40px;width:25.08px;height:1px;background:#D2D2D2"></div>
<div class="a" style="left:100.32px;top:122.40px;width:25.08px;height:1px;background:#D2D2D2"></div>
<div class="a" style="left:100.32px;top:144.40px;width:25.08px;height:1px;background:#D2D2D2"></div>
<div class="a" style="left:100.32px;top:166.40px;width:25.08px;height:1px;background:#D2D2D2"></div>
<div class="a" style="left:99.82px;top:17.50px;width:1px;height:155.00px;background:#C1C1C1"></div>
<div class="t" style="left:125.40px;width:25.08px;text-align:center;top:3.27px;font-size:7.2px;color:#222">Su 19</div>
<div class="a" style="left:124.90px;top:1px;width:1px;height:12px;background:#E0E0E0"></div>
<div class="a" style="left:125.40px;top:17.50px;width:25.08px;height:155.00px;background:#C1C1C1"></div>
<div class="a" style="left:125.40px;top:34.40px;width:25.08px;height:1px;background:#D2D2D2"></div>
<div class="a" style="left:125.40px;top:56.40px;width:25.08px;height:1px;background:#D2D2D2"></div>
<div class="a" style="left:125.40px;top:78.40px;width:25.08px;height:1px;background:#D2D2D2"></div>
<div class="a" style="left:125.40px;top:100.40px;width:25.08px;height:1px;background:#D2D2D2"></div>
<div class="a" style="left:125.40px;top:122.40px;width:25.08px;height:1px;background:#D2D2D2"></div>
<div class="a" style="left:125.40px;top:144.40px;width:25.08px;height:1px;background:#D2D2D2"></div>
<div class="a" style="left:125.40px;top:166.40px;width:25.08px;height:1px;background:#D2D2D2"></div>
<div class="a" style="left:124.90px;top:17.50px;width:1px;height:155.00px;background:#D2D2D2"></div>
<div class="t" style="left:150.48px;width:25.08px;text-align:center;top:3.27px;font-size:7.2px;color:#222">Mo 20</div>
<div class="a" style="left:149.98px;top:1px;width:1px;height:12px;background:#E0E0E0"></div>
<div class="a" style="left:150.48px;top:17.50px;width:25.08px;height:155.00px;background:#FFFAEE"></div>
<div class="a" style="left:150.48px;top:17.50px;width:25.08px;height:16.90px;background:#FEF5DA"></div>
<div class="a" style="left:150.48px;top:100.40px;width:25.08px;height:22px;background:#FDEDC6"></div>
<div class="a" style="left:150.48px;top:34.40px;width:25.08px;height:1px;background:#EEE7DA"></div>
<div class="a" style="left:150.48px;top:56.40px;width:25.08px;height:1px;background:#EEE7DA"></div>
<div class="a" style="left:150.48px;top:78.40px;width:25.08px;height:1px;background:#EEE7DA"></div>
<div class="a" style="left:150.48px;top:100.40px;width:25.08px;height:1px;background:#EEE7DA"></div>
<div class="a" style="left:150.48px;top:122.40px;width:25.08px;height:1px;background:#EEE7DA"></div>
<div class="a" style="left:150.48px;top:144.40px;width:25.08px;height:1px;background:#EEE7DA"></div>
<div class="a" style="left:150.48px;top:166.40px;width:25.08px;height:1px;background:#EEE7DA"></div>
<div class="a" style="left:149.98px;top:17.50px;width:1px;height:155.00px;background:#D8D2C8"></div>
<div class="t" style="left:175.56px;width:25.08px;text-align:center;top:3.27px;font-size:7.2px;color:#222">Tu 21</div>
<div class="a" style="left:175.06px;top:1px;width:1px;height:12px;background:#E0E0E0"></div>
<div class="a" style="left:175.56px;top:17.50px;width:25.08px;height:155.00px;background:#FFFAEE"></div>
<div class="a" style="left:175.56px;top:17.50px;width:25.08px;height:16.90px;background:#FEF5DA"></div>
<div class="a" style="left:175.56px;top:100.40px;width:25.08px;height:22px;background:#FDEDC6"></div>
<div class="a" style="left:175.56px;top:34.40px;width:25.08px;height:1px;background:#EEE7DA"></div>
<div class="a" style="left:175.56px;top:56.40px;width:25.08px;height:1px;background:#EEE7DA"></div>
<div class="a" style="left:175.56px;top:78.40px;width:25.08px;height:1px;background:#EEE7DA"></div>
<div class="a" style="left:175.56px;top:100.40px;width:25.08px;height:1px;background:#EEE7DA"></div>
<div class="a" style="left:175.56px;top:122.40px;width:25.08px;height:1px;background:#EEE7DA"></div>
<div class="a" style="left:175.56px;top:144.40px;width:25.08px;height:1px;background:#EEE7DA"></div>
<div class="a" style="left:175.56px;top:166.40px;width:25.08px;height:1px;background:#EEE7DA"></div>
<div class="a" style="left:175.06px;top:17.50px;width:1px;height:155.00px;background:#D8D2C8"></div>
<div class="t" style="left:200.64px;width:25.08px;text-align:center;top:3.27px;font-size:7.2px;color:#222">We 22</div>
<div class="a" style="left:200.14px;top:1px;width:1px;height:12px;background:#E0E0E0"></div>
<div class="a" style="left:200.64px;top:17.50px;width:25.08px;height:155.00px;background:#FFFAEE"></div>
<div class="a" style="left:200.64px;top:17.50px;width:25.08px;height:16.90px;background:#FEF5DA"></div>
<div class="a" style="left:200.64px;top:100.40px;width:25.08px;height:22px;background:#FDEDC6"></div>
<div class="a" style="left:200.64px;top:34.40px;width:25.08px;height:1px;background:#EEE7DA"></div>
<div class="a" style="left:200.64px;top:56.40px;width:25.08px;height:1px;background:#EEE7DA"></div>
<div class="a" style="left:200.64px;top:78.40px;width:25.08px;height:1px;background:#EEE7DA"></div>
<div class="a" style="left:200.64px;top:100.40px;width:25.08px;height:1px;background:#EEE7DA"></div>
<div class="a" style="left:200.64px;top:122.40px;width:25.08px;height:1px;background:#EEE7DA"></div>
<div class="a" style="left:200.64px;top:144.40px;width:25.08px;height:1px;background:#EEE7DA"></div>
<div class="a" style="left:200.64px;top:166.40px;width:25.08px;height:1px;background:#EEE7DA"></div>
<div class="a" style="left:200.14px;top:17.50px;width:1px;height:155.00px;background:#D8D2C8"></div>
<div class="t" style="left:225.72px;width:25.08px;text-align:center;top:3.27px;font-size:7.2px;color:#222">Th 23</div>
<div class="a" style="left:225.22px;top:1px;width:1px;height:12px;background:#E0E0E0"></div>
<div class="a" style="left:225.72px;top:17.50px;width:25.08px;height:155.00px;background:#FFFAEE"></div>
<div class="a" style="left:225.72px;top:17.50px;width:25.08px;height:16.90px;background:#FEF5DA"></div>
<div class="a" style="left:225.72px;top:100.40px;width:25.08px;height:22px;background:#FDEDC6"></div>
<div class="a" style="left:225.72px;top:34.40px;width:25.08px;height:1px;background:#EEE7DA"></div>
<div class="a" style="left:225.72px;top:56.40px;width:25.08px;height:1px;background:#EEE7DA"></div>
<div class="a" style="left:225.72px;top:78.40px;width:25.08px;height:1px;background:#EEE7DA"></div>
<div class="a" style="left:225.72px;top:100.40px;width:25.08px;height:1px;background:#EEE7DA"></div>
<div class="a" style="left:225.72px;top:122.40px;width:25.08px;height:1px;background:#EEE7DA"></div>
<div class="a" style="left:225.72px;top:144.40px;width:25.08px;height:1px;background:#EEE7DA"></div>
<div class="a" style="left:225.72px;top:166.40px;width:25.08px;height:1px;background:#EEE7DA"></div>
<div class="a" style="left:225.22px;top:17.50px;width:1px;height:155.00px;background:#D8D2C8"></div>
<div class="t" style="left:250.80px;width:25.08px;text-align:center;top:3.27px;font-size:7.2px;color:#222">Fr 24</div>
<div class="a" style="left:250.30px;top:1px;width:1px;height:12px;background:#E0E0E0"></div>
<div class="a" style="left:250.80px;top:17.50px;width:25.08px;height:155.00px;background:#FFFAEE"></div>
<div class="a" style="left:250.80px;top:17.50px;width:25.08px;height:16.90px;background:#FEF5DA"></div>
<div class="a" style="left:250.80px;top:100.40px;width:25.08px;height:22px;background:#FDEDC6"></div>
<div class="a" style="left:250.80px;top:34.40px;width:25.08px;height:1px;background:#EEE7DA"></div>
<div class="a" style="left:250.80px;top:56.40px;width:25.08px;height:1px;background:#EEE7DA"></div>
<div class="a" style="left:250.80px;top:78.40px;width:25.08px;height:1px;background:#EEE7DA"></div>
<div class="a" style="left:250.80px;top:100.40px;width:25.08px;height:1px;background:#EEE7DA"></div>
<div class="a" style="left:250.80px;top:122.40px;width:25.08px;height:1px;background:#EEE7DA"></div>
<div class="a" style="left:250.80px;top:144.40px;width:25.08px;height:1px;background:#EEE7DA"></div>
<div class="a" style="left:250.80px;top:166.40px;width:25.08px;height:1px;background:#EEE7DA"></div>
<div class="a" style="left:250.30px;top:17.50px;width:1px;height:155.00px;background:#D8D2C8"></div>
<div class="t" style="left:275.88px;width:25.08px;text-align:center;top:3.27px;font-size:7.2px;color:#222">Sa 25</div>
<div class="a" style="left:275.38px;top:1px;width:1px;height:12px;background:#E0E0E0"></div>
<div class="a" style="left:275.88px;top:17.50px;width:25.08px;height:155.00px;background:#C1C1C1"></div>
<div class="a" style="left:275.88px;top:34.40px;width:25.08px;height:1px;background:#D2D2D2"></div>
<div class="a" style="left:275.88px;top:56.40px;width:25.08px;height:1px;background:#D2D2D2"></div>
<div class="a" style="left:275.88px;top:78.40px;width:25.08px;height:1px;background:#D2D2D2"></div>
<div class="a" style="left:275.88px;top:100.40px;width:25.08px;height:1px;background:#D2D2D2"></div>
<div class="a" style="left:275.88px;top:122.40px;width:25.08px;height:1px;background:#D2D2D2"></div>
<div class="a" style="left:275.88px;top:144.40px;width:25.08px;height:1px;background:#D2D2D2"></div>
<div class="a" style="left:275.88px;top:166.40px;width:25.08px;height:1px;background:#D2D2D2"></div>
<div class="a" style="left:275.38px;top:17.50px;width:1px;height:155.00px;background:#C1C1C1"></div>
<div class="t" style="left:300.96px;width:25.08px;text-align:center;top:3.27px;font-size:7.2px;color:#222">Su 26</div>
<div class="a" style="left:300.46px;top:1px;width:1px;height:12px;background:#E0E0E0"></div>
<div class="a" style="left:300.96px;top:17.50px;width:25.08px;height:155.00px;background:#C1C1C1"></div>
<div class="a" style="left:300.96px;top:34.40px;width:25.08px;height:1px;background:#D2D2D2"></div>
<div class="a" style="left:300.96px;top:56.40px;width:25.08px;height:1px;background:#D2D2D2"></div>
<div class="a" style="left:300.96px;top:78.40px;width:25.08px;height:1px;background:#D2D2D2"></div>
<div class="a" style="left:300.96px;top:100.40px;width:25.08px;height:1px;background:#D2D2D2"></div>
<div class="a" style="left:300.96px;top:122.40px;width:25.08px;height:1px;background:#D2D2D2"></div>
<div class="a" style="left:300.96px;top:144.40px;width:25.08px;height:1px;background:#D2D2D2"></div>
<div class="a" style="left:300.96px;top:166.40px;width:25.08px;height:1px;background:#D2D2D2"></div>
<div class="a" style="left:300.46px;top:17.50px;width:1px;height:155.00px;background:#D2D2D2"></div>
<div class="t" style="left:326.04px;width:25.08px;text-align:center;top:3.27px;font-size:7.2px;color:#222">Mo 27</div>
<div class="a" style="left:325.54px;top:1px;width:1px;height:12px;background:#E0E0E0"></div>
<div class="a" style="left:326.04px;top:17.50px;width:25.08px;height:155.00px;background:#FFFAEE"></div>
<div class="a" style="left:326.04px;top:17.50px;width:25.08px;height:16.90px;background:#FEF5DA"></div>
<div class="a" style="left:326.04px;top:100.40px;width:25.08px;height:22px;background:#FDEDC6"></div>
<div class="a" style="left:326.04px;top:34.40px;width:25.08px;height:1px;background:#EEE7DA"></div>
<div class="a" style="left:326.04px;top:56.40px;width:25.08px;height:1px;background:#EEE7DA"></div>
<div class="a" style="left:326.04px;top:78.40px;width:25.08px;height:1px;background:#EEE7DA"></div>
<div class="a" style="left:326.04px;top:100.40px;width:25.08px;height:1px;background:#EEE7DA"></div>
<div class="a" style="left:326.04px;top:122.40px;width:25.08px;height:1px;background:#EEE7DA"></div>
<div class="a" style="left:326.04px;top:144.40px;width:25.08px;height:1px;background:#EEE7DA"></div>
<div class="a" style="left:326.04px;top:166.40px;width:25.08px;height:1px;background:#EEE7DA"></div>
<div class="a" style="left:325.54px;top:17.50px;width:1px;height:155.00px;background:#D8D2C8"></div>
<div class="t" style="left:351.12px;width:25.08px;text-align:center;top:3.27px;font-size:7.2px;color:#222">Tu 28</div>
<div class="a" style="left:350.62px;top:1px;width:1px;height:12px;background:#E0E0E0"></div>
<div class="a" style="left:351.12px;top:17.50px;width:25.08px;height:155.00px;background:#FFFAEE"></div>
<div class="a" style="left:351.12px;top:17.50px;width:25.08px;height:16.90px;background:#FEF5DA"></div>
<div class="a" style="left:351.12px;top:100.40px;width:25.08px;height:22px;background:#FDEDC6"></div>
<div class="a" style="left:351.12px;top:34.40px;width:25.08px;height:1px;background:#EEE7DA"></div>
<div class="a" style="left:351.12px;top:56.40px;width:25.08px;height:1px;background:#EEE7DA"></div>
<div class="a" style="left:351.12px;top:78.40px;width:25.08px;height:1px;background:#EEE7DA"></div>
<div class="a" style="left:351.12px;top:100.40px;width:25.08px;height:1px;background:#EEE7DA"></div>
<div class="a" style="left:351.12px;top:122.40px;width:25.08px;height:1px;background:#EEE7DA"></div>
<div class="a" style="left:351.12px;top:144.40px;width:25.08px;height:1px;background:#EEE7DA"></div>
<div class="a" style="left:351.12px;top:166.40px;width:25.08px;height:1px;background:#EEE7DA"></div>
<div class="a" style="left:350.62px;top:17.50px;width:1px;height:155.00px;background:#D8D2C8"></div>
<div class="t" style="left:376.20px;width:25.08px;text-align:center;top:3.27px;font-size:7.2px;color:#222">We 29</div>
<div class="a" style="left:375.70px;top:1px;width:1px;height:12px;background:#E0E0E0"></div>
<div class="a" style="left:376.20px;top:17.50px;width:25.08px;height:155.00px;background:#FFFAEE"></div>
<div class="a" style="left:376.20px;top:17.50px;width:25.08px;height:16.90px;background:#FEF5DA"></div>
<div class="a" style="left:376.20px;top:100.40px;width:25.08px;height:22px;background:#FDEDC6"></div>
<div class="a" style="left:376.20px;top:34.40px;width:25.08px;height:1px;background:#EEE7DA"></div>
<div class="a" style="left:376.20px;top:56.40px;width:25.08px;height:1px;background:#EEE7DA"></div>
<div class="a" style="left:376.20px;top:78.40px;width:25.08px;height:1px;background:#EEE7DA"></div>
<div class="a" style="left:376.20px;top:100.40px;width:25.08px;height:1px;background:#EEE7DA"></div>
<div class="a" style="left:376.20px;top:122.40px;width:25.08px;height:1px;background:#EEE7DA"></div>
<div class="a" style="left:376.20px;top:144.40px;width:25.08px;height:1px;background:#EEE7DA"></div>
<div class="a" style="left:376.20px;top:166.40px;width:25.08px;height:1px;background:#EEE7DA"></div>
<div class="a" style="left:375.70px;top:17.50px;width:1px;height:155.00px;background:#D8D2C8"></div>
<div class="t" style="left:401.28px;width:25.08px;text-align:center;top:3.27px;font-size:7.2px;color:#222">Th 30</div>
<div class="a" style="left:400.78px;top:1px;width:1px;height:12px;background:#E0E0E0"></div>
<div class="a" style="left:401.28px;top:17.50px;width:25.08px;height:155.00px;background:#FFFAEE"></div>
<div class="a" style="left:401.28px;top:17.50px;width:25.08px;height:16.90px;background:#FEF5DA"></div>
<div class="a" style="left:401.28px;top:100.40px;width:25.08px;height:22px;background:#FDEDC6"></div>
<div class="a" style="left:401.28px;top:34.40px;width:25.08px;height:1px;background:#EEE7DA"></div>
<div class="a" style="left:401.28px;top:56.40px;width:25.08px;height:1px;background:#EEE7DA"></div>
<div class="a" style="left:401.28px;top:78.40px;width:25.08px;height:1px;background:#EEE7DA"></div>
<div class="a" style="left:401.28px;top:100.40px;width:25.08px;height:1px;background:#EEE7DA"></div>
<div class="a" style="left:401.28px;top:122.40px;width:25.08px;height:1px;background:#EEE7DA"></div>
<div class="a" style="left:401.28px;top:144.40px;width:25.08px;height:1px;background:#EEE7DA"></div>
<div class="a" style="left:401.28px;top:166.40px;width:25.08px;height:1px;background:#EEE7DA"></div>
<div class="a" style="left:400.78px;top:17.50px;width:1px;height:155.00px;background:#D8D2C8"></div>
<div class="t" style="left:426.36px;width:25.08px;text-align:center;top:3.27px;font-size:7.2px;color:#222">Fr 31</div>
<div class="a" style="left:425.86px;top:1px;width:1px;height:12px;background:#E0E0E0"></div>
<div class="a" style="left:426.36px;top:17.50px;width:25.08px;height:155.00px;background:#FFFAEE"></div>
<div class="a" style="left:426.36px;top:17.50px;width:25.08px;height:16.90px;background:#FEF5DA"></div>
<div class="a" style="left:426.36px;top:100.40px;width:25.08px;height:22px;background:#FDEDC6"></div>
<div class="a" style="left:426.36px;top:34.40px;width:25.08px;height:1px;background:#EEE7DA"></div>
<div class="a" style="left:426.36px;top:56.40px;width:25.08px;height:1px;background:#EEE7DA"></div>
<div class="a" style="left:426.36px;top:78.40px;width:25.08px;height:1px;background:#EEE7DA"></div>
<div class="a" style="left:426.36px;top:100.40px;width:25.08px;height:1px;background:#EEE7DA"></div>
<div class="a" style="left:426.36px;top:122.40px;width:25.08px;height:1px;background:#EEE7DA"></div>
<div class="a" style="left:426.36px;top:144.40px;width:25.08px;height:1px;background:#EEE7DA"></div>
<div class="a" style="left:426.36px;top:166.40px;width:25.08px;height:1px;background:#EEE7DA"></div>
<div class="a" style="left:425.86px;top:17.50px;width:1px;height:155.00px;background:#D8D2C8"></div>
<div class="t" style="left:451.44px;width:25.08px;text-align:center;top:3.27px;font-size:7.2px;color:#222">Sa 1</div>
<div class="a" style="left:450.94px;top:1px;width:1px;height:12px;background:#E0E0E0"></div>
<div class="a" style="left:451.44px;top:17.50px;width:25.08px;height:155.00px;background:#C1C1C1"></div>
<div class="a" style="left:451.44px;top:34.40px;width:25.08px;height:1px;background:#D2D2D2"></div>
<div class="a" style="left:451.44px;top:56.40px;width:25.08px;height:1px;background:#D2D2D2"></div>
<div class="a" style="left:451.44px;top:78.40px;width:25.08px;height:1px;background:#D2D2D2"></div>
<div class="a" style="left:451.44px;top:100.40px;width:25.08px;height:1px;background:#D2D2D2"></div>
<div class="a" style="left:451.44px;top:122.40px;width:25.08px;height:1px;background:#D2D2D2"></div>
<div class="a" style="left:451.44px;top:144.40px;width:25.08px;height:1px;background:#D2D2D2"></div>
<div class="a" style="left:451.44px;top:166.40px;width:25.08px;height:1px;background:#D2D2D2"></div>
<div class="a" style="left:450.94px;top:17.50px;width:1px;height:155.00px;background:#C1C1C1"></div>
<div class="t" style="left:476.52px;width:25.08px;text-align:center;top:3.27px;font-size:7.2px;color:#222">Su 2</div>
<div class="a" style="left:476.02px;top:1px;width:1px;height:12px;background:#E0E0E0"></div>
<div class="a" style="left:476.52px;top:17.50px;width:25.08px;height:155.00px;background:#C1C1C1"></div>
<div class="a" style="left:476.52px;top:34.40px;width:25.08px;height:1px;background:#D2D2D2"></div>
<div class="a" style="left:476.52px;top:56.40px;width:25.08px;height:1px;background:#D2D2D2"></div>
<div class="a" style="left:476.52px;top:78.40px;width:25.08px;height:1px;background:#D2D2D2"></div>
<div class="a" style="left:476.52px;top:100.40px;width:25.08px;height:1px;background:#D2D2D2"></div>
<div class="a" style="left:476.52px;top:122.40px;width:25.08px;height:1px;background:#D2D2D2"></div>
<div class="a" style="left:476.52px;top:144.40px;width:25.08px;height:1px;background:#D2D2D2"></div>
<div class="a" style="left:476.52px;top:166.40px;width:25.08px;height:1px;background:#D2D2D2"></div>
<div class="a" style="left:476.02px;top:17.50px;width:1px;height:155.00px;background:#D2D2D2"></div>
<div class="t" style="left:501.60px;width:25.08px;text-align:center;top:3.27px;font-size:7.2px;color:#222">Mo 3</div>
<div class="a" style="left:501.10px;top:1px;width:1px;height:12px;background:#E0E0E0"></div>
<div class="a" style="left:501.60px;top:17.50px;width:25.08px;height:155.00px;background:#FFFAEE"></div>
<div class="a" style="left:501.60px;top:17.50px;width:25.08px;height:16.90px;background:#FEF5DA"></div>
<div class="a" style="left:501.60px;top:100.40px;width:25.08px;height:22px;background:#FDEDC6"></div>
<div class="a" style="left:501.60px;top:34.40px;width:25.08px;height:1px;background:#EEE7DA"></div>
<div class="a" style="left:501.60px;top:56.40px;width:25.08px;height:1px;background:#EEE7DA"></div>
<div class="a" style="left:501.60px;top:78.40px;width:25.08px;height:1px;background:#EEE7DA"></div>
<div class="a" style="left:501.60px;top:100.40px;width:25.08px;height:1px;background:#EEE7DA"></div>
<div class="a" style="left:501.60px;top:122.40px;width:25.08px;height:1px;background:#EEE7DA"></div>
<div class="a" style="left:501.60px;top:144.40px;width:25.08px;height:1px;background:#EEE7DA"></div>
<div class="a" style="left:501.60px;top:166.40px;width:25.08px;height:1px;background:#EEE7DA"></div>
<div class="a" style="left:501.10px;top:17.50px;width:1px;height:155.00px;background:#D8D2C8"></div>
<div class="t" style="left:526.68px;width:25.08px;text-align:center;top:3.27px;font-size:7.2px;color:#222">Tu 4</div>
<div class="a" style="left:526.18px;top:1px;width:1px;height:12px;background:#E0E0E0"></div>
<div class="a" style="left:526.68px;top:17.50px;width:25.08px;height:155.00px;background:#FFFAEE"></div>
<div class="a" style="left:526.68px;top:17.50px;width:25.08px;height:16.90px;background:#FEF5DA"></div>
<div class="a" style="left:526.68px;top:100.40px;width:25.08px;height:22px;background:#FDEDC6"></div>
<div class="a" style="left:526.68px;top:34.40px;width:25.08px;height:1px;background:#EEE7DA"></div>
<div class="a" style="left:526.68px;top:56.40px;width:25.08px;height:1px;background:#EEE7DA"></div>
<div class="a" style="left:526.68px;top:78.40px;width:25.08px;height:1px;background:#EEE7DA"></div>
<div class="a" style="left:526.68px;top:100.40px;width:25.08px;height:1px;background:#EEE7DA"></div>
<div class="a" style="left:526.68px;top:122.40px;width:25.08px;height:1px;background:#EEE7DA"></div>
<div class="a" style="left:526.68px;top:144.40px;width:25.08px;height:1px;background:#EEE7DA"></div>
<div class="a" style="left:526.68px;top:166.40px;width:25.08px;height:1px;background:#EEE7DA"></div>
<div class="a" style="left:526.18px;top:17.50px;width:1px;height:155.00px;background:#D8D2C8"></div>
<div class="t" style="left:551.76px;width:25.08px;text-align:center;top:3.27px;font-size:7.2px;color:#222">We 5</div>
<div class="a" style="left:551.26px;top:1px;width:1px;height:12px;background:#E0E0E0"></div>
<div class="a" style="left:551.76px;top:17.50px;width:25.08px;height:155.00px;background:#FFFAEE"></div>
<div class="a" style="left:551.76px;top:17.50px;width:25.08px;height:16.90px;background:#FEF5DA"></div>
<div class="a" style="left:551.76px;top:100.40px;width:25.08px;height:22px;background:#FDEDC6"></div>
<div class="a" style="left:551.76px;top:34.40px;width:25.08px;height:1px;background:#EEE7DA"></div>
<div class="a" style="left:551.76px;top:56.40px;width:25.08px;height:1px;background:#EEE7DA"></div>
<div class="a" style="left:551.76px;top:78.40px;width:25.08px;height:1px;background:#EEE7DA"></div>
<div class="a" style="left:551.76px;top:100.40px;width:25.08px;height:1px;background:#EEE7DA"></div>
<div class="a" style="left:551.76px;top:122.40px;width:25.08px;height:1px;background:#EEE7DA"></div>
<div class="a" style="left:551.76px;top:144.40px;width:25.08px;height:1px;background:#EEE7DA"></div>
<div class="a" style="left:551.76px;top:166.40px;width:25.08px;height:1px;background:#EEE7DA"></div>
<div class="a" style="left:551.26px;top:17.50px;width:1px;height:155.00px;background:#D8D2C8"></div>
<div class="t" style="left:576.84px;width:25.08px;text-align:center;top:3.27px;font-size:7.2px;color:#222">Th 6</div>
<div class="a" style="left:576.34px;top:1px;width:1px;height:12px;background:#E0E0E0"></div>
<div class="a" style="left:576.84px;top:17.50px;width:25.08px;height:155.00px;background:#FFFAEE"></div>
<div class="a" style="left:576.84px;top:17.50px;width:25.08px;height:16.90px;background:#FEF5DA"></div>
<div class="a" style="left:576.84px;top:100.40px;width:25.08px;height:22px;background:#FDEDC6"></div>
<div class="a" style="left:576.84px;top:34.40px;width:25.08px;height:1px;background:#EEE7DA"></div>
<div class="a" style="left:576.84px;top:56.40px;width:25.08px;height:1px;background:#EEE7DA"></div>
<div class="a" style="left:576.84px;top:78.40px;width:25.08px;height:1px;background:#EEE7DA"></div>
<div class="a" style="left:576.84px;top:100.40px;width:25.08px;height:1px;background:#EEE7DA"></div>
<div class="a" style="left:576.84px;top:122.40px;width:25.08px;height:1px;background:#EEE7DA"></div>
<div class="a" style="left:576.84px;top:144.40px;width:25.08px;height:1px;background:#EEE7DA"></div>
<div class="a" style="left:576.84px;top:166.40px;width:25.08px;height:1px;background:#EEE7DA"></div>
<div class="a" style="left:576.34px;top:17.50px;width:1px;height:155.00px;background:#D8D2C8"></div>
</div>
<div class="a" style="left:310.3px;top:359.2px;width:584.2px;height:3.5px;background:#5283D6;border-top:1px solid #2B3F70;box-sizing:border-box"></div>
<div class="a" style="left:309.6px;top:359.2px;width:1.5px;height:158.3px;background:#5A6494"></div>
<div class="a" style="left:310.1px;top:381.8px;width:8.799999999999955px;height:11.800000000000011px;background:linear-gradient(#30E030,#00B400);border:1px solid #1E5A1E;box-sizing:border-box"></div>
<div class="a" style="left:335.3px;top:404px;width:8.300000000000011px;height:12px;background:linear-gradient(20deg,#3A74B4,#7FAEDC 65%,#A8CCF0);border:1px solid #2A3A52;border-radius:1.5px;box-sizing:border-box"></div>
<div class="a" style="left:360px;top:426px;width:8.800000000000011px;height:11.800000000000011px;background:linear-gradient(20deg,#3A74B4,#7FAEDC 65%,#A8CCF0);border:1px solid #2A3A52;border-radius:1.5px;box-sizing:border-box"></div>
<div class="a" style="left:310.1px;top:447.6px;width:8.799999999999955px;height:11.899999999999977px;background:linear-gradient(20deg,#3A74B4,#7FAEDC 65%,#A8CCF0);border:1px solid #2A3A52;border-radius:1.5px;box-sizing:border-box"></div>
<div class="a" style="left:485.6px;top:469.2px;width:33.89999999999998px;height:12.100000000000023px;background:linear-gradient(20deg,#3A74B4,#7FAEDC 65%,#A8CCF0);border:1px solid #2A3A52;border-radius:1.5px;box-sizing:border-box"></div>
<div class="a" style="left:510.7px;top:491.4px;width:33.80000000000001px;height:12.100000000000023px;background:linear-gradient(20deg,#3A74B4,#7FAEDC 65%,#A8CCF0);border:1px solid #2A3A52;border-radius:1.5px;box-sizing:border-box"></div>
<div class="a" style="left:535.7px;top:513.4px;width:34.3px;height:4.1px;overflow:hidden"><div style="width:34.3px;height:12px;box-sizing:border-box;background:linear-gradient(20deg,#3A74B4,#7FAEDC 65%,#A8CCF0);border:1px solid #2A3A52;border-radius:1.5px"></div></div>
<div class="a" style="left:894.5px;top:321px;width:10.5px;height:196.5px;background:#F0F0F0;border-left:1px solid #D8D8D8;box-sizing:border-box"></div>
<div class="a" style="left:894.5px;top:321px;width:10.5px;height:10.4px;background:#E8E8E8;border:1px solid #C0C0C0;box-sizing:border-box"></div>
<svg class="a" style="left:896.5px;top:323.5px" width="7" height="5" viewBox="0 0 7 5"><path d="M0.5 4.5 L3.5 0.5 L6.5 4.5Z" fill="#A0A0A0"/></svg>
<div class="a" style="left:894.5px;top:331.4px;width:10.5px;height:12.6px;background:#FFFFFF;border:1px solid #C8C8C8;box-sizing:border-box"></div>
<div class="a" style="left:894.5px;top:506.5px;width:10.5px;height:10.2px;background:#E8E8E8;border:1px solid #C0C0C0;box-sizing:border-box"></div>
<svg class="a" style="left:896.5px;top:509px" width="7" height="5" viewBox="0 0 7 5"><path d="M0.5 0.5 L3.5 4.5 L6.5 0.5Z" fill="#A0A0A0"/></svg>
<div class="a" style="left:310px;top:517.5px;width:595px;height:11px;background:#F0F0F0"></div>
<div class="a" style="left:313.4px;top:517.8px;width:10.6px;height:10.5px;background:#E6E6E6;border:1px solid #BDBDBD;box-sizing:border-box"></div>
<svg class="a" style="left:316px;top:519.5px" width="6" height="7" viewBox="0 0 6 7"><path d="M5 0.5 L1 3.5 L5 6.5Z" fill="#999"/></svg>
<div class="a" style="left:535.7px;top:518px;width:13.3px;height:10.3px;background:#FFFFFF;border:1px solid #C8C8C8;box-sizing:border-box"></div>
<div class="a" style="left:882.7px;top:517.8px;width:10.5px;height:10.5px;background:#E6E6E6;border:1px solid #BDBDBD;box-sizing:border-box"></div>
<svg class="a" style="left:885.5px;top:519.5px" width="6" height="7" viewBox="0 0 6 7"><path d="M1 0.5 L5 3.5 L1 6.5Z" fill="#999"/></svg>
<div class="a" style="left:1px;top:528.5px;width:904px;height:1.5px;background:#A8A8A8"></div>
<div class="a" style="left:434px;top:534.6px;width:56.5px;height:14.2px;background:linear-gradient(#E9E9E9,#E1E1E1);border:1px solid #C2C2C2;box-sizing:border-box"></div>
<svg class="a" style="left:436px;top:536.5px" width="11" height="10" viewBox="0 0 11 10"><rect x="0.5" y="0.5" width="10" height="9" fill="#C8C8F0" stroke="#6060A0" stroke-width="0.8"/><path d="M5.5 1.5 V8.5 M3 6 L5.5 8.5 L8 6" stroke="#000" stroke-width="1.2" fill="none"/><path d="M3 1.5 H8" stroke="#000" stroke-width="1"/></svg>
<div class="t" style="left:449px;top:539.22px;font-size:6.9px;color:#111;font-weight:400;">Go to S.Start</div>
<div class="a" style="left:495.8px;top:534.6px;width:55.19999999999999px;height:14.2px;background:linear-gradient(#E9E9E9,#E1E1E1);border:1px solid #C2C2C2;box-sizing:border-box"></div>
<svg class="a" style="left:497.5px;top:536.5px" width="11" height="10" viewBox="0 0 11 10"><rect x="0.5" y="0.5" width="10" height="9" fill="#C8C8F0" stroke="#6060A0" stroke-width="0.8"/><path d="M2 8.5 L8 2.5" stroke="#C04000" stroke-width="1.4"/><path d="M5 2 H8.5 V5.5" stroke="#000" stroke-width="1" fill="none"/></svg>
<div class="t" style="left:510.5px;top:539.22px;font-size:6.9px;color:#111;font-weight:400;">Go to Today</div>
<div class="a" style="left:557px;top:534.6px;width:55.60000000000002px;height:14.2px;background:linear-gradient(#E9E9E9,#E1E1E1);border:1px solid #C2C2C2;box-sizing:border-box"></div>
<svg class="a" style="left:567px;top:537px" width="10" height="9" viewBox="0 0 10 9"><rect x="0.5" y="0.5" width="5.5" height="4.5" fill="none" stroke="#333" stroke-width="0.9"/><rect x="3.5" y="3.5" width="5.5" height="4.5" fill="#fff" stroke="#333" stroke-width="0.9"/></svg>
<div class="t" style="left:579.5px;top:539.22px;font-size:6.9px;color:#111;font-weight:400;">Zoom in</div>
<div class="a" style="left:618px;top:534.6px;width:55.5px;height:14.2px;background:linear-gradient(#E9E9E9,#E1E1E1);border:1px solid #C2C2C2;box-sizing:border-box"></div>
<svg class="a" style="left:627px;top:537px" width="10" height="9" viewBox="0 0 10 9"><rect x="3.5" y="0.5" width="5.5" height="4.5" fill="none" stroke="#333" stroke-width="0.9"/><rect x="0.5" y="3.5" width="5.5" height="4.5" fill="#fff" stroke="#333" stroke-width="0.9"/></svg>
<div class="t" style="left:638px;top:539.22px;font-size:6.9px;color:#111;font-weight:400;">Zoom out</div>
<div class="a" style="left:830px;top:534.6px;width:56px;height:14.2px;background:linear-gradient(#E9E9E9,#E1E1E1);border:1px solid #C2C2C2;box-sizing:border-box"></div>
<svg class="a" style="left:846px;top:536px" width="12" height="12" viewBox="0 0 13 13"><path d="M1 1 H7 V11 H1Z" fill="#C8C8C0" stroke="#606058" stroke-width="0.7"/><path d="M1.5 1.5 L5 2.8 V12.5 L1.5 11Z" fill="#4E6A30"/><path d="M2.5 4 L4 4.5 V9 L2.5 8.5Z" fill="#8AB04A"/><path d="M8 6.5 L10 4.5 L12 6.5 L10 8.5Z" fill="#000"/></svg>
<div class="t" style="left:859px;top:539.22px;font-size:6.9px;color:#111;font-weight:400;"><u>E</u>xit</div>
<div class="a" style="left:1px;top:550.3px;width:904px;height:1px;background:#D8D8D8"></div>
<div class="a" style="left:1px;top:551px;width:904px;height:10.5px;background:#F0F0F0"></div>
<div class="t" style="left:3.8px;top:554.19px;font-size:7.36px;color:#111;font-weight:400;">Dataset name:&nbsp; DMSProduction</div>
<div class="a" style="left:157px;top:551.5px;width:1px;height:10px;background:#D0D0D0"></div>
</body></html>
